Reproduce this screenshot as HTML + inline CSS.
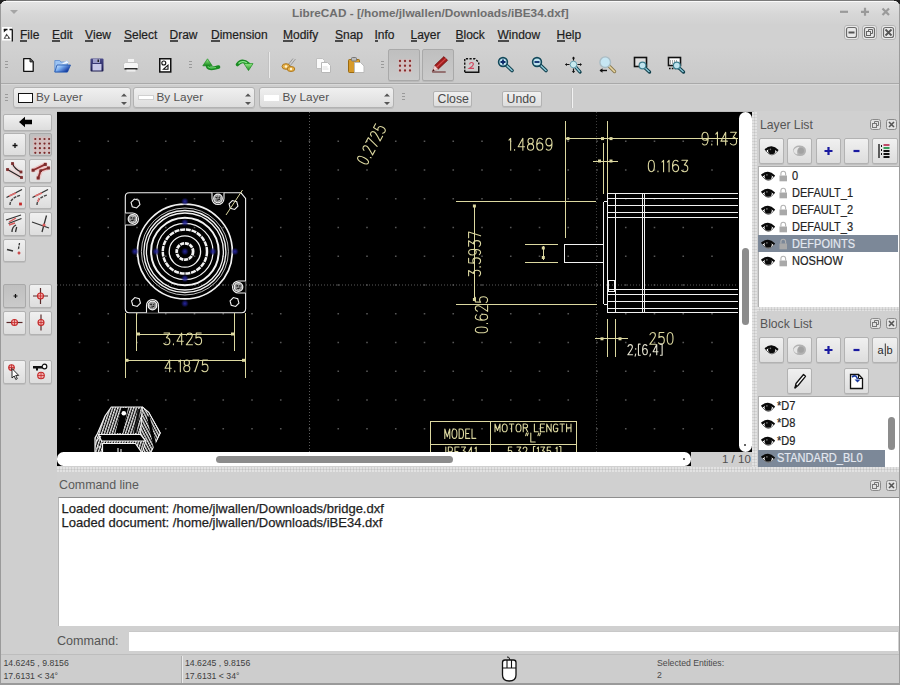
<!DOCTYPE html><html><head><meta charset="utf-8"><style>
*{margin:0;padding:0;box-sizing:border-box}
html,body{width:900px;height:685px;overflow:hidden}
body{position:relative;background:#d0d0d0;font-family:"Liberation Sans",sans-serif;color:#2e2e2e}
.a{position:absolute}
.t{position:absolute;white-space:nowrap;line-height:1}
.b{position:absolute;border:1px solid #b2b2b2;border-radius:2px;background:linear-gradient(#f0f0f0,#dddddd);box-shadow:0 1px 0 rgba(0,0,0,.08)}
.p{background:linear-gradient(#bfbfbf,#cacaca);border-color:#a9a9a9}
.m{position:absolute;white-space:nowrap;line-height:1;font-size:12px;color:#1e1e1e;top:29px;-webkit-text-stroke:0.2px #1e1e1e}
.m u{text-decoration:none;position:relative}
.m u:after{content:"";position:absolute;left:0;right:0;top:12px;height:1.5px;background:#4a4a4a}
.hd{position:absolute;width:3px;height:9px;background:repeating-linear-gradient(#9a9a9a 0 1px,transparent 1px 3px)}
.dotv,.doth{position:absolute;background-color:#d2d2d2;background-image:radial-gradient(circle at 1px 1px,#e2e2e2 0.8px,transparent 1.2px),radial-gradient(circle at 2.5px 2.5px,#c4c4c4 0.6px,transparent 1px);background-size:3px 3px}
svg{position:absolute;overflow:visible}
</style></head><body><div class="a" style="left:0;top:0;width:900px;height:24px;background:linear-gradient(#e4e4e4,#d6d6d6 60%,#d2d2d2);border-top:1px solid #7a7a7a"></div><div class="a" style="left:4px;top:1px;width:892px;height:1px;background:#fafafa"></div><div class="a" style="left:0;top:0;width:6px;height:6px;background:radial-gradient(circle at 6px 6px,transparent 5px,#222 5.5px)"></div><div class="a" style="left:894px;top:0;width:6px;height:6px;background:radial-gradient(circle at 0 6px,transparent 5px,#222 5.5px)"></div><svg style="left:9px;top:9px" width="10" height="6"><path d="M1 1h8l-4 4z" fill="#a5a5a5"/></svg><div class="t" style="left:292px;top:8px;font-size:11.8px;font-weight:bold;color:#6e6e6e">LibreCAD - [/home/jlwallen/Downloads/iBE34.dxf]</div><svg style="left:838px;top:6px" width="56" height="14"><path d="M2 5.8h8" stroke="#9a9a9a" stroke-width="2.2"/><path d="M23 5.8h8M27 1.8v8" stroke="#9a9a9a" stroke-width="2.2"/><path d="M44.5 2.5l6.5 6.5M51 2.5l-6.5 6.5" stroke="#9a9a9a" stroke-width="2.2"/></svg><div class="a" style="left:0;top:24px;width:900px;height:23px;background:#d1d1d1"></div><svg style="left:2px;top:27px" width="12" height="15"><rect x="0" y="0" width="10" height="13.5" fill="#fff"/><path d="M1.8 2.5H5.5M7.5 2.5h3M10.3 2.5V14.5" stroke="#111" stroke-width="1.3" fill="none"/><path d="M1.8 2v3.5L5 2.5z" fill="#111"/><path d="M1.6 11.8L4.5 6.5L8.5 11.8z" fill="#444"/><rect x="3.6" y="9.3" width="2.4" height="2" fill="#fff"/></svg><div class="m" style="left:20px"><u>F</u>ile</div><div class="m" style="left:52px"><u>E</u>dit</div><div class="m" style="left:85px"><u>V</u>iew</div><div class="m" style="left:124px"><u>S</u>elect</div><div class="m" style="left:169.5px"><u>D</u>raw</div><div class="m" style="left:211px"><u>D</u>imension</div><div class="m" style="left:283px"><u>M</u>odify</div><div class="m" style="left:335px"><u>S</u>nap</div><div class="m" style="left:374.5px"><u>I</u>nfo</div><div class="m" style="left:410.5px"><u>L</u>ayer</div><div class="m" style="left:455.5px"><u>B</u>lock</div><div class="m" style="left:497.5px"><u>W</u>indow</div><div class="m" style="left:556.5px"><u>H</u>elp</div><svg style="left:843.5px;top:25px" width="15" height="15"><rect x="0.5" y="0.5" width="14" height="14" rx="2.5" fill="#e9e9e9" stroke="#b3b3b3"/><rect x="2.5" y="2.5" width="10" height="10" rx="2" fill="none" stroke="#6a6a6a" stroke-width="1.2"/><path d="M4.5 7.5h6" stroke="#555" stroke-width="2"/></svg><svg style="left:862px;top:25px" width="15" height="15"><rect x="0.5" y="0.5" width="14" height="14" rx="2.5" fill="#e9e9e9" stroke="#b3b3b3"/><rect x="2.5" y="2.5" width="10" height="10" rx="2" fill="none" stroke="#6a6a6a" stroke-width="1.2"/><rect x="4.5" y="6.5" width="4" height="4" fill="none" stroke="#666"/><path d="M6.5 6.5v-2h4v4h-2" fill="none" stroke="#666"/></svg><svg style="left:881.3px;top:25px" width="15" height="15"><rect x="0.5" y="0.5" width="14" height="14" rx="2.5" fill="#e9e9e9" stroke="#b3b3b3"/><rect x="2.5" y="2.5" width="10" height="10" rx="2" fill="none" stroke="#6a6a6a" stroke-width="1.2"/><path d="M4.5 4.5l6 6M10.5 4.5l-6 6" stroke="#555" stroke-width="1.8"/></svg><div class="a" style="left:0;top:47px;width:900px;height:36px;background:linear-gradient(#d1d1d1,#c9c9c9)"></div><div class="a" style="left:0;top:83px;width:900px;height:1px;background:#a9a9a9"></div><div class="a" style="left:0;top:84px;width:900px;height:1px;background:#d8d8d8"></div><div class="hd" style="left:5px;top:61px"></div><div class="hd" style="left:189px;top:61px"></div><div class="hd" style="left:381px;top:61px"></div><div class="a" style="left:268px;top:52px;width:1px;height:26px;background:#c2c2c2"></div><div class="a" style="left:269px;top:52px;width:1px;height:26px;background:#ebebeb"></div><div class="b p" style="left:388px;top:49px;width:32px;height:32px"></div><div class="b p" style="left:422px;top:49px;width:32px;height:32px"></div><div class="a" style="left:0;top:85px;width:900px;height:26px;background:#cdcdcd"></div><div class="hd" style="left:5px;top:94px"></div><div class="hd" style="left:402px;top:93px"></div><div class="b" style="left:12.5px;top:87px;width:118px;height:21px;border-radius:3px"></div><div class="a" style="left:18px;top:93px;width:15px;height:10px;background:#fff;border:1px solid #111"></div><div class="t" style="left:36.0px;top:91.5px;font-size:11.8px;color:#525252">By Layer</div><svg style="left:119.5px;top:91px" width="8" height="16"><path d="M1 5.5l3-3 3 3zM1 11l3 3 3-3z" fill="#555"/></svg><div class="b" style="left:133px;top:87px;width:122px;height:21px;border-radius:3px"></div><div class="a" style="left:137.5px;top:95px;width:16px;height:5px;background:#fff;border:1px solid #d0d0d0"></div><div class="t" style="left:156.5px;top:91.5px;font-size:11.8px;color:#525252">By Layer</div><svg style="left:244px;top:91px" width="8" height="16"><path d="M1 5.5l3-3 3 3zM1 11l3 3 3-3z" fill="#555"/></svg><div class="b" style="left:259px;top:87px;width:135px;height:21px;border-radius:3px"></div><div class="a" style="left:264px;top:95px;width:14.5px;height:5.5px;background:#fff"></div><div class="t" style="left:282.5px;top:91.5px;font-size:11.8px;color:#525252">By Layer</div><svg style="left:383px;top:91px" width="8" height="16"><path d="M1 5.5l3-3 3 3zM1 11l3 3 3-3z" fill="#555"/></svg><div class="b" style="left:433px;top:90.5px;width:39px;height:16px;border-radius:2px"></div><div class="t" style="left:437.5px;top:92.5px;font-size:12.3px;color:#4a4a4a">Close</div><div class="b" style="left:502px;top:90.5px;width:40px;height:16px;border-radius:2px"></div><div class="t" style="left:506.5px;top:92.5px;font-size:12.3px;color:#4a4a4a">Undo</div><div class="a" style="left:571px;top:88px;width:1px;height:20px;background:#c0c0c0"></div><div class="a" style="left:572px;top:88px;width:1px;height:20px;background:#f2f2f2"></div><div class="a" style="left:0;top:111px;width:57px;height:544px;background:#cfcfcf"></div><div class="a" style="left:0;top:4px;width:1px;height:681px;background:#9a9a9a"></div><div class="a" style="left:899px;top:4px;width:1px;height:681px;background:#a0a0a0"></div><svg style="left:23px;top:58px" width="11" height="14" viewBox="0 0 11 14"><path d="M0.7 0.7h6.5l3 3v9.6h-9.5z" fill="#fff" stroke="#111" stroke-width="1.3" stroke-linejoin="round"/><path d="M7 0.7v3.2h3.2" fill="#666" stroke="#222"/></svg><svg style="left:54px;top:59px" width="17" height="14" viewBox="0 0 17 14"><defs><linearGradient id="gf" x1="0" y1="0" x2="1" y2="0.6"><stop offset="0" stop-color="#e4f2ff"/><stop offset=".45" stop-color="#7aaef0"/><stop offset="1" stop-color="#0a2f9a"/></linearGradient></defs><path d="M0.8 1.5h5l1 1.5h6.5v10H0.8z" fill="#9cc4f4" stroke="#5a8ad0" stroke-width="0.8"/><path d="M6 5.5L13 1.5L15 4" fill="#f4f8ff" stroke="#a8c8f0" stroke-width="0.8"/><path d="M3 6h13.5l-3 7H0.8z" fill="url(#gf)" stroke="#2050a8" stroke-width="0.8"/></svg><svg style="left:90px;top:58px" width="14" height="14" viewBox="0 0 14 14"><defs><linearGradient id="gs" x1="0" y1="0" x2="0" y2="1"><stop offset="0" stop-color="#4a4a8a"/><stop offset="1" stop-color="#1c1c50"/></linearGradient></defs><rect x="0.5" y="0.5" width="13" height="13" rx="1" fill="url(#gs)"/><rect x="2.5" y="6" width="9" height="6.5" fill="#c8c8e8"/><rect x="3" y="1" width="7" height="4" fill="#9c9cc8"/><rect x="7.5" y="1.5" width="1.5" height="2.5" fill="#222"/></svg><svg style="left:123px;top:58px" width="16" height="14" viewBox="0 0 16 14"><rect x="4.5" y="0.5" width="7" height="5" fill="#f4f4f4" stroke="#cfcfcf"/><path d="M0.5 6.5q0-2 2-2h11q2 0 2 2v4.5h-15z" fill="#f6f6f6" stroke="#c4c4c4"/><rect x="1.5" y="10" width="13" height="1.6" fill="#2a2a2a"/><rect x="3.5" y="11.6" width="9" height="2" fill="#eee"/></svg><svg style="left:159px;top:58px" width="13" height="15" viewBox="0 0 13 15"><rect x="0.75" y="0.75" width="11" height="13.2" fill="#fff" stroke="#111" stroke-width="1.5"/><circle cx="4.8" cy="5" r="2" fill="none" stroke="#111" stroke-width="1.1"/><path d="M4.5 11.2L9 7.2V11.2z" fill="none" stroke="#111" stroke-width="1.1"/></svg><svg style="left:202px;top:58px" width="18" height="14" viewBox="0 0 18 14"><defs><linearGradient id="gu" x1="0" y1="0" x2="0" y2="1"><stop offset="0" stop-color="#9af08a"/><stop offset="1" stop-color="#15861a"/></linearGradient></defs><path d="M5.5 7Q5.5 12.5 16.5 9" fill="none" stroke="#1a8a22" stroke-width="3.6" stroke-linecap="round"/><path d="M5.8 7.5Q6 11 14 9.5" fill="none" stroke="#6ad86a" stroke-width="1.2"/><path d="M0.8 7.8L5.5 0.8L10.2 7.8z" fill="url(#gu)" stroke="#178a1c" stroke-width="0.7"/></svg><svg style="left:236px;top:58px" width="18" height="14" viewBox="0 0 18 14"><path d="M1.5 6.5Q6 0.5 12.5 6" fill="none" stroke="#1a8a22" stroke-width="3.6" stroke-linecap="round"/><path d="M2.5 5.5Q6 2 11 5" fill="none" stroke="#8ae88a" stroke-width="1.2"/><path d="M8 5.6H17L12.5 12.6z" fill="url(#gu)" stroke="#178a1c" stroke-width="0.7"/></svg><svg style="left:281px;top:58px" width="16" height="14" viewBox="0 0 16 14"><path d="M9 8L14.5 1M7 7L12 0.5" stroke="#9a9a9a" stroke-width="1"/><ellipse cx="5" cy="8.5" rx="4" ry="2.8" fill="#e6b048" stroke="#b07a20"/><ellipse cx="10" cy="11" rx="3.8" ry="2.5" fill="#e6b048" stroke="#b07a20"/><circle cx="5" cy="8.5" r="1.3" fill="#fff3cf"/><circle cx="10" cy="11" r="1.2" fill="#fff3cf"/></svg><svg style="left:316px;top:58px" width="15" height="15" viewBox="0 0 15 15"><path d="M0.5 0.5h6l2 2v8h-8z" fill="#fafafa" stroke="#c0c0c0"/><path d="M5.5 4.5h6l3 3v7h-9z" fill="#fff" stroke="#b8b8b8"/><path d="M6.5 9h5M6.5 11h6" stroke="#ddd"/></svg><svg style="left:348px;top:57px" width="17" height="16" viewBox="0 0 17 16"><rect x="0.5" y="2.5" width="11" height="13" rx="1" fill="#d79a2a" stroke="#9a6a10"/><rect x="3.5" y="0.5" width="5" height="3.5" rx="1" fill="#bbb" stroke="#777"/><path d="M6.5 5.5h6l3.5 3.5v6.5h-9.5z" fill="#fff" stroke="#bbb"/></svg><svg style="left:398px;top:59px" width="14" height="14" viewBox="0 0 14 14"><rect x="0" y="0" width="14" height="14" fill="#e8bcbc" opacity=".35"/><circle cx="2" cy="2.0" r="1.15" fill="#8a2c2c"/><circle cx="2" cy="6.75" r="1.15" fill="#8a2c2c"/><circle cx="2" cy="11.5" r="1.15" fill="#8a2c2c"/><circle cx="7" cy="2.0" r="1.15" fill="#8a2c2c"/><circle cx="7" cy="6.75" r="1.15" fill="#8a2c2c"/><circle cx="7" cy="11.5" r="1.15" fill="#8a2c2c"/><circle cx="12" cy="2.0" r="1.15" fill="#8a2c2c"/><circle cx="12" cy="6.75" r="1.15" fill="#8a2c2c"/><circle cx="12" cy="11.5" r="1.15" fill="#8a2c2c"/></svg><svg style="left:430px;top:56px" width="20" height="20" viewBox="0 0 20 20"><path d="M4.6 9.4L13.9 0.6L17.6 4.3L8.1 13.2z" fill="#a01c1c" stroke="#6a0a0a" stroke-width="0.7"/><path d="M6.5 11.2L15.8 2.4" stroke="#d04848" stroke-width="1.3"/><path d="M4.6 9.4L8.1 13.2L2 15.6z" fill="#f3cfcf" stroke="#b08080" stroke-width="0.5"/><path d="M2 15.6l1.6-2.6 1 1.4z" fill="#3a0a0a"/><path d="M2.2 16h13.5" stroke="#6a2a2a" stroke-width="1.1"/></svg><svg style="left:464px;top:58px" width="16" height="15" viewBox="0 0 16 15"><path d="M0.75 14V0.75H11L14.75 4.2V8" fill="none" stroke="#111" stroke-width="1.4" stroke-dasharray="2.2 1.4"/><path d="M0.75 14.2H14.75V8" fill="none" stroke="#111" stroke-width="1.4"/><path d="M5.5 6.3Q6 4.4 7.7 4.5Q9.6 4.7 9.3 6.6Q9 8 5.5 10.3H10" fill="none" stroke="#d04860" stroke-width="1.2"/></svg><svg style="left:496px;top:55px" width="20" height="20" viewBox="0 0 20 20"><path d="M7 7L16 15.5" stroke="#0d3d4a" stroke-width="3.6" stroke-linecap="round"/><path d="M7 7L16 15.5" stroke="#8cc6d6" stroke-width="1.6" stroke-linecap="round"/><circle cx="7" cy="7" r="4.4" fill="#bfe3ee" stroke="#12485a" stroke-width="1.6"/><path d="M4.5 7h5M7 4.5v5" stroke="#0b2a6a" stroke-width="1.8"/></svg><svg style="left:530px;top:55px" width="20" height="20" viewBox="0 0 20 20"><path d="M7 7L16 15.5" stroke="#0d3d4a" stroke-width="3.6" stroke-linecap="round"/><path d="M7 7L16 15.5" stroke="#8cc6d6" stroke-width="1.6" stroke-linecap="round"/><circle cx="7" cy="7" r="4.4" fill="#bfe3ee" stroke="#12485a" stroke-width="1.6"/><path d="M4.5 7h5" stroke="#0b2a6a" stroke-width="1.8"/></svg><svg style="left:564px;top:55px" width="20" height="20" viewBox="0 0 20 20"><path d="M9.5 9.5L16 17" stroke="#0d3d4a" stroke-width="3.4" stroke-linecap="round"/><path d="M9.5 9.5L16 17" stroke="#8cc6d6" stroke-width="1.4"/><circle cx="9.5" cy="9.5" r="3.3" fill="#c8eaf0" stroke="#6aa0b0"/><path d="M1.5 9.5h4M13.5 9.5h3.5M9.5 2v3.5M9.5 13.5v4" stroke="#111" stroke-width="1.2"/><path d="M1 9.5l2-1.6v3.2zM18 9.5l-2-1.6v3.2zM9.5 1.5l-1.6 2h3.2zM9.5 18l-1.6-2h3.2z" fill="#111"/></svg><svg style="left:598px;top:55px" width="20" height="20" viewBox="0 0 20 20"><path d="M8 8L16.5 16.5" stroke="#8a7a50" stroke-width="3.4" stroke-linecap="round"/><path d="M8 8L16.5 16.5" stroke="#e8d6a0" stroke-width="1.6" stroke-linecap="round"/><circle cx="7.2" cy="7.2" r="5.3" fill="#c6e6f3" stroke="#a9bcc4" stroke-width="1.4"/><path d="M2 15.5h7" stroke="#111" stroke-width="1.4"/><path d="M1.5 15.5l3-2.2v4.4z" fill="#111"/></svg><svg style="left:633px;top:56px" width="20" height="20" viewBox="0 0 20 20"><rect x="1.5" y="1.5" width="12" height="9" fill="#e0e0e0" stroke="#111" stroke-width="1.6"/><path d="M10 10L16.5 16" stroke="#0d3d4a" stroke-width="3.4" stroke-linecap="round"/><path d="M10 10L16.5 16" stroke="#8cc6d6" stroke-width="1.4"/><circle cx="9.5" cy="9.5" r="3.4" fill="#bfe3ee" stroke="#3e7f90" stroke-width="1.2"/></svg><svg style="left:667px;top:56px" width="20" height="20" viewBox="0 0 20 20"><rect x="1.5" y="1.5" width="12" height="8" fill="#fff" stroke="#111" stroke-width="1.6"/><path d="M3 5h8M3 7h6" stroke="#555" stroke-dasharray="1 1"/><path d="M2 12.5h10" stroke="#111" stroke-width="1.5" stroke-dasharray="1.6 1.2"/><path d="M10 10L16.5 16" stroke="#0d3d4a" stroke-width="3.4" stroke-linecap="round"/><path d="M10 10L16.5 16" stroke="#8cc6d6" stroke-width="1.4"/><circle cx="9.8" cy="9.5" r="3.4" fill="#bfe3ee" stroke="#3e7f90" stroke-width="1.2"/></svg><div class="b" style="left:3px;top:114px;width:49px;height:17px"></div><svg style="left:18px;top:116px" width="16" height="12" viewBox="0 0 16 12"><path d="M1 6L7 0.8V3.8H14V8.2H7V11.2z" fill="#000"/></svg><div class="b" style="left:2.8px;top:132.8px;width:23.5px;height:23.5px"></div><svg style="left:2.8px;top:132.8px" width="24" height="24" viewBox="0 0 24 24"><path d="M9.5 12.5h5M12 10v5" stroke="#111" stroke-width="1.3"/></svg><div class="b p" style="left:28.8px;top:132.8px;width:23.5px;height:23.5px"></div><svg style="left:28.8px;top:132.8px" width="24" height="24" viewBox="0 0 24 24"><rect x="4" y="3.5" width="17" height="17" fill="#e6b8b8" opacity=".45"/><circle cx="6.3" cy="6.0" r="1.1" fill="#7a2a2a"/><circle cx="6.3" cy="10.6" r="1.1" fill="#7a2a2a"/><circle cx="6.3" cy="15.2" r="1.1" fill="#7a2a2a"/><circle cx="6.3" cy="19.799999999999997" r="1.1" fill="#7a2a2a"/><circle cx="10.899999999999999" cy="6.0" r="1.1" fill="#7a2a2a"/><circle cx="10.899999999999999" cy="10.6" r="1.1" fill="#7a2a2a"/><circle cx="10.899999999999999" cy="15.2" r="1.1" fill="#7a2a2a"/><circle cx="10.899999999999999" cy="19.799999999999997" r="1.1" fill="#7a2a2a"/><circle cx="15.5" cy="6.0" r="1.1" fill="#7a2a2a"/><circle cx="15.5" cy="10.6" r="1.1" fill="#7a2a2a"/><circle cx="15.5" cy="15.2" r="1.1" fill="#7a2a2a"/><circle cx="15.5" cy="19.799999999999997" r="1.1" fill="#7a2a2a"/><circle cx="20.099999999999998" cy="6.0" r="1.1" fill="#7a2a2a"/><circle cx="20.099999999999998" cy="10.6" r="1.1" fill="#7a2a2a"/><circle cx="20.099999999999998" cy="15.2" r="1.1" fill="#7a2a2a"/><circle cx="20.099999999999998" cy="19.799999999999997" r="1.1" fill="#7a2a2a"/></svg><div class="b" style="left:2.8px;top:159.3px;width:23.5px;height:23.5px"></div><svg style="left:2.8px;top:159.3px" width="24" height="24" viewBox="0 0 24 24"><path d="M4.5 10.5L18.5 18.5M9.5 4.5Q11 9.5 18 13" fill="none" stroke="#f0a8a8" stroke-width="4" opacity=".35"/><path d="M4.5 10.5L18.5 18.5M9.5 4.5Q11 9.5 18 13" fill="none" stroke="#222" stroke-width="1.1"/><rect x="3.1" y="9.1" width="2.8" height="2.8" fill="#7e2e2e"/><rect x="17.1" y="17.1" width="2.8" height="2.8" fill="#7e2e2e"/><rect x="8.1" y="3.1" width="2.8" height="2.8" fill="#7e2e2e"/><rect x="16.6" y="11.6" width="2.8" height="2.8" fill="#7e2e2e"/></svg><div class="b" style="left:28.8px;top:159.3px;width:23.5px;height:23.5px"></div><svg style="left:28.8px;top:159.3px" width="24" height="24" viewBox="0 0 24 24"><path d="M4.1 11.2L16.3 5.4M9.2 19L11.7 11.7L19.4 9" fill="none" stroke="#f2a0a0" stroke-width="4.5" opacity=".45" stroke-linecap="round"/><path d="M4.1 11.2L16.3 5.4M9.2 19L11.7 11.7L19.4 9" fill="none" stroke="#8e2e2e" stroke-width="1.8"/><rect x="2.5999999999999996" y="9.7" width="3" height="3" fill="#7a2a2a"/><rect x="14.8" y="3.9000000000000004" width="3" height="3" fill="#7a2a2a"/><rect x="7.699999999999999" y="17.5" width="3" height="3" fill="#7a2a2a"/><rect x="17.9" y="7.5" width="3" height="3" fill="#7a2a2a"/><rect x="10.399999999999999" y="10.399999999999999" width="2.6" height="2.6" fill="#7a2a2a"/></svg><div class="b" style="left:2.8px;top:185.8px;width:23.5px;height:23.5px"></div><svg style="left:2.8px;top:185.8px" width="24" height="24" viewBox="0 0 24 24"><path d="M3.5 11.5L19 3.5" stroke="#333" stroke-width="1.4"/><path d="M7 19Q7 12 18 9" fill="none" stroke="#444" stroke-width="1.4" stroke-dasharray="3 1"/><path d="M6 10L13 7" stroke="#e07070" stroke-width="1.5"/><rect x="16.1" y="16.6" width="2.8" height="2.8" fill="#c42a2a"/></svg><div class="b" style="left:28.8px;top:185.8px;width:23.5px;height:23.5px"></div><svg style="left:28.8px;top:185.8px" width="24" height="24" viewBox="0 0 24 24"><path d="M3.5 11.5L19 3.5" stroke="#333" stroke-width="1.4"/><path d="M8 19Q8 12 18 9" fill="none" stroke="#444" stroke-width="1.4" stroke-dasharray="3 1"/><path d="M6 10L13 7M10 12l-1 4" stroke="#e07070" stroke-width="1.5"/></svg><div class="b" style="left:2.8px;top:212.3px;width:23.5px;height:23.5px"></div><svg style="left:2.8px;top:212.3px" width="24" height="24" viewBox="0 0 24 24"><path d="M3 8L18 3M5.5 11.5L18.5 6.5" stroke="#333" stroke-width="1.3"/><path d="M6 10L13 6M6 13l6-2" stroke="#d85a5a" stroke-width="1.4"/><path d="M9 20Q9 15 13 13M12.5 20l1.2-5" fill="none" stroke="#333" stroke-width="1.3"/></svg><div class="b" style="left:28.8px;top:212.3px;width:23.5px;height:23.5px"></div><svg style="left:28.8px;top:212.3px" width="24" height="24" viewBox="0 0 24 24"><path d="M3 10L20 16M17.5 3.5L13 20" stroke="#333" stroke-width="1.3"/><circle cx="15" cy="13" r="1.6" fill="#d85a5a"/></svg><div class="b" style="left:2.8px;top:238.8px;width:23.5px;height:23.5px"></div><svg style="left:2.8px;top:238.8px" width="24" height="24" viewBox="0 0 24 24"><path d="M4 10.5l6 1.5" stroke="#333" stroke-width="1.3"/><path d="M16.5 4l-1.2 7" stroke="#333" stroke-width="1.3" stroke-dasharray="2.5 1"/><path d="M14.5 14h3M16 12.5v3" stroke="#c42a2a" stroke-width="1.2"/></svg><div class="b p" style="left:2.8px;top:284px;width:23.5px;height:23.5px"></div><svg style="left:2.8px;top:284px" width="24" height="24" viewBox="0 0 24 24"><path d="M10.5 12h4M12.5 10v4" stroke="#111" stroke-width="1.2"/></svg><div class="b" style="left:28.8px;top:284px;width:23.5px;height:23.5px"></div><svg style="left:28.8px;top:284px" width="24" height="24" viewBox="0 0 24 24"><path d="M4 12h15M11.5 4v16" stroke="#5a2a2a" stroke-width="1.2"/><circle cx="11.5" cy="12" r="3" fill="#f2b0b0" stroke="#c42a2a" stroke-width="1.1"/><path d="M8.5 12h6M11.5 9v6" stroke="#c42a2a" stroke-width="0.8"/></svg><div class="b" style="left:2.8px;top:311px;width:23.5px;height:23.5px"></div><svg style="left:2.8px;top:311px" width="24" height="24" viewBox="0 0 24 24"><path d="M3.5 11.5h16" stroke="#5a2a2a" stroke-width="1.2"/><circle cx="11.5" cy="11.5" r="3" fill="#f2b0b0" stroke="#c42a2a" stroke-width="1.1"/><path d="M8.5 11.5h6M11.5 8.5v6" stroke="#c42a2a" stroke-width="0.8"/></svg><div class="b" style="left:28.8px;top:311px;width:23.5px;height:23.5px"></div><svg style="left:28.8px;top:311px" width="24" height="24" viewBox="0 0 24 24"><path d="M12 3.5v16" stroke="#5a2a2a" stroke-width="1.2"/><circle cx="12" cy="11.5" r="3" fill="#f2b0b0" stroke="#c42a2a" stroke-width="1.1"/><path d="M9 11.5h6M12 8.5v6" stroke="#c42a2a" stroke-width="0.8"/></svg><div class="b" style="left:2.8px;top:360.3px;width:23.5px;height:23.5px"></div><svg style="left:2.8px;top:360.3px" width="24" height="24" viewBox="0 0 24 24"><circle cx="8.5" cy="7.5" r="2.8" fill="#f2b0b0" stroke="#c42a2a" stroke-width="1.1"/><path d="M5.7 7.5h5.6M8.5 4.7v5.6" stroke="#c42a2a" stroke-width="0.8"/><path d="M9 8.5v9.5l2.2-2 1.6 3.5 1.5-0.8-1.6-3.3h3z" fill="#fff" stroke="#111" stroke-width="0.9"/></svg><div class="b" style="left:28.8px;top:360.3px;width:23.5px;height:23.5px"></div><svg style="left:28.8px;top:360.3px" width="24" height="24" viewBox="0 0 24 24"><path d="M4 6h9v2.5H9v2H7v-2H4z" fill="#111"/><circle cx="15.5" cy="6.5" r="2.3" fill="#fff" stroke="#111" stroke-width="1.2"/><circle cx="12" cy="15.5" r="3.3" fill="#f2b0b0" stroke="#c42a2a" stroke-width="1.1"/><path d="M8.7 15.5h6.6M12 12.2v6.6" stroke="#c42a2a" stroke-width="0.8"/></svg><div class="a" style="left:56.5px;top:111px;width:697px;height:1px;background:#bdbdbd"></div><div class="a" style="left:57px;top:112px;width:682px;height:341px;background:#000"></div><div class="a" style="left:57px;top:452px;width:634px;height:13.5px;background:#000"></div><div class="a" style="left:738.5px;top:112px;width:13.5px;height:340px;background:#000"></div><div class="a" style="left:57px;top:452px;width:634px;height:13.5px;background:#fff;border-radius:6.5px"></div><div class="a" style="left:683px;top:458px;width:2px;height:2px;background:#666"></div><div class="a" style="left:215.5px;top:455.5px;width:237.5px;height:7.5px;background:#8c8c8c;border-radius:4px"></div><div class="a" style="left:738.5px;top:112px;width:13.5px;height:339.5px;background:#fff;border-radius:6.5px"></div><div class="a" style="left:741.5px;top:247.5px;width:7px;height:77px;background:#8c8c8c;border-radius:3.5px"></div><div class="a" style="left:691px;top:452px;width:61px;height:14px;background:#cfcfcf"></div><div class="a" style="left:744px;top:444px;width:2px;height:2px;background:#666"></div><div class="t" style="left:722px;top:454px;font-size:11.5px;color:#505050">1 / 10</div><div class="doth" style="left:57px;top:467px;width:843px;height:5px"></div><div class="dotv" style="left:752px;top:112px;width:5px;height:355px"></div><svg style="left:57px;top:112px;overflow:hidden" width="681" height="340" viewBox="57 112 681 340"><g><defs><radialGradient id="bg"><stop offset="0" stop-color="#2828a0"/><stop offset=".5" stop-color="#1c1c80" stop-opacity=".7"/><stop offset="1" stop-color="#101050" stop-opacity="0"/></radialGradient></defs><path d="M78.70 140.45h1.6v1.6h-1.6zM78.70 169.20h1.6v1.6h-1.6zM78.70 197.95h1.6v1.6h-1.6zM78.70 226.70h1.6v1.6h-1.6zM78.70 255.45h1.6v1.6h-1.6zM78.70 284.20h1.6v1.6h-1.6zM78.70 312.95h1.6v1.6h-1.6zM78.70 341.70h1.6v1.6h-1.6zM78.70 370.45h1.6v1.6h-1.6zM78.70 399.20h1.6v1.6h-1.6zM78.70 427.95h1.6v1.6h-1.6zM107.45 140.45h1.6v1.6h-1.6zM107.45 169.20h1.6v1.6h-1.6zM107.45 197.95h1.6v1.6h-1.6zM107.45 226.70h1.6v1.6h-1.6zM107.45 255.45h1.6v1.6h-1.6zM107.45 284.20h1.6v1.6h-1.6zM107.45 312.95h1.6v1.6h-1.6zM107.45 341.70h1.6v1.6h-1.6zM107.45 370.45h1.6v1.6h-1.6zM107.45 399.20h1.6v1.6h-1.6zM107.45 427.95h1.6v1.6h-1.6zM136.20 140.45h1.6v1.6h-1.6zM136.20 169.20h1.6v1.6h-1.6zM136.20 197.95h1.6v1.6h-1.6zM136.20 226.70h1.6v1.6h-1.6zM136.20 255.45h1.6v1.6h-1.6zM136.20 284.20h1.6v1.6h-1.6zM136.20 312.95h1.6v1.6h-1.6zM136.20 341.70h1.6v1.6h-1.6zM136.20 370.45h1.6v1.6h-1.6zM136.20 399.20h1.6v1.6h-1.6zM136.20 427.95h1.6v1.6h-1.6zM164.95 140.45h1.6v1.6h-1.6zM164.95 169.20h1.6v1.6h-1.6zM164.95 197.95h1.6v1.6h-1.6zM164.95 226.70h1.6v1.6h-1.6zM164.95 255.45h1.6v1.6h-1.6zM164.95 284.20h1.6v1.6h-1.6zM164.95 312.95h1.6v1.6h-1.6zM164.95 341.70h1.6v1.6h-1.6zM164.95 370.45h1.6v1.6h-1.6zM164.95 399.20h1.6v1.6h-1.6zM164.95 427.95h1.6v1.6h-1.6zM193.70 140.45h1.6v1.6h-1.6zM193.70 169.20h1.6v1.6h-1.6zM193.70 197.95h1.6v1.6h-1.6zM193.70 226.70h1.6v1.6h-1.6zM193.70 255.45h1.6v1.6h-1.6zM193.70 284.20h1.6v1.6h-1.6zM193.70 312.95h1.6v1.6h-1.6zM193.70 341.70h1.6v1.6h-1.6zM193.70 370.45h1.6v1.6h-1.6zM193.70 399.20h1.6v1.6h-1.6zM193.70 427.95h1.6v1.6h-1.6zM222.45 140.45h1.6v1.6h-1.6zM222.45 169.20h1.6v1.6h-1.6zM222.45 197.95h1.6v1.6h-1.6zM222.45 226.70h1.6v1.6h-1.6zM222.45 255.45h1.6v1.6h-1.6zM222.45 284.20h1.6v1.6h-1.6zM222.45 312.95h1.6v1.6h-1.6zM222.45 341.70h1.6v1.6h-1.6zM222.45 370.45h1.6v1.6h-1.6zM222.45 399.20h1.6v1.6h-1.6zM222.45 427.95h1.6v1.6h-1.6zM251.20 140.45h1.6v1.6h-1.6zM251.20 169.20h1.6v1.6h-1.6zM251.20 197.95h1.6v1.6h-1.6zM251.20 226.70h1.6v1.6h-1.6zM251.20 255.45h1.6v1.6h-1.6zM251.20 284.20h1.6v1.6h-1.6zM251.20 312.95h1.6v1.6h-1.6zM251.20 341.70h1.6v1.6h-1.6zM251.20 370.45h1.6v1.6h-1.6zM251.20 399.20h1.6v1.6h-1.6zM251.20 427.95h1.6v1.6h-1.6zM279.95 140.45h1.6v1.6h-1.6zM279.95 169.20h1.6v1.6h-1.6zM279.95 197.95h1.6v1.6h-1.6zM279.95 226.70h1.6v1.6h-1.6zM279.95 255.45h1.6v1.6h-1.6zM279.95 284.20h1.6v1.6h-1.6zM279.95 312.95h1.6v1.6h-1.6zM279.95 341.70h1.6v1.6h-1.6zM279.95 370.45h1.6v1.6h-1.6zM279.95 399.20h1.6v1.6h-1.6zM279.95 427.95h1.6v1.6h-1.6zM308.70 140.45h1.6v1.6h-1.6zM308.70 169.20h1.6v1.6h-1.6zM308.70 197.95h1.6v1.6h-1.6zM308.70 226.70h1.6v1.6h-1.6zM308.70 255.45h1.6v1.6h-1.6zM308.70 284.20h1.6v1.6h-1.6zM308.70 312.95h1.6v1.6h-1.6zM308.70 341.70h1.6v1.6h-1.6zM308.70 370.45h1.6v1.6h-1.6zM308.70 399.20h1.6v1.6h-1.6zM308.70 427.95h1.6v1.6h-1.6zM337.45 140.45h1.6v1.6h-1.6zM337.45 169.20h1.6v1.6h-1.6zM337.45 197.95h1.6v1.6h-1.6zM337.45 226.70h1.6v1.6h-1.6zM337.45 255.45h1.6v1.6h-1.6zM337.45 284.20h1.6v1.6h-1.6zM337.45 312.95h1.6v1.6h-1.6zM337.45 341.70h1.6v1.6h-1.6zM337.45 370.45h1.6v1.6h-1.6zM337.45 399.20h1.6v1.6h-1.6zM337.45 427.95h1.6v1.6h-1.6zM366.20 140.45h1.6v1.6h-1.6zM366.20 169.20h1.6v1.6h-1.6zM366.20 197.95h1.6v1.6h-1.6zM366.20 226.70h1.6v1.6h-1.6zM366.20 255.45h1.6v1.6h-1.6zM366.20 284.20h1.6v1.6h-1.6zM366.20 312.95h1.6v1.6h-1.6zM366.20 341.70h1.6v1.6h-1.6zM366.20 370.45h1.6v1.6h-1.6zM366.20 399.20h1.6v1.6h-1.6zM366.20 427.95h1.6v1.6h-1.6zM394.95 140.45h1.6v1.6h-1.6zM394.95 169.20h1.6v1.6h-1.6zM394.95 197.95h1.6v1.6h-1.6zM394.95 226.70h1.6v1.6h-1.6zM394.95 255.45h1.6v1.6h-1.6zM394.95 284.20h1.6v1.6h-1.6zM394.95 312.95h1.6v1.6h-1.6zM394.95 341.70h1.6v1.6h-1.6zM394.95 370.45h1.6v1.6h-1.6zM394.95 399.20h1.6v1.6h-1.6zM394.95 427.95h1.6v1.6h-1.6zM423.70 140.45h1.6v1.6h-1.6zM423.70 169.20h1.6v1.6h-1.6zM423.70 197.95h1.6v1.6h-1.6zM423.70 226.70h1.6v1.6h-1.6zM423.70 255.45h1.6v1.6h-1.6zM423.70 284.20h1.6v1.6h-1.6zM423.70 312.95h1.6v1.6h-1.6zM423.70 341.70h1.6v1.6h-1.6zM423.70 370.45h1.6v1.6h-1.6zM423.70 399.20h1.6v1.6h-1.6zM423.70 427.95h1.6v1.6h-1.6zM452.45 140.45h1.6v1.6h-1.6zM452.45 169.20h1.6v1.6h-1.6zM452.45 197.95h1.6v1.6h-1.6zM452.45 226.70h1.6v1.6h-1.6zM452.45 255.45h1.6v1.6h-1.6zM452.45 284.20h1.6v1.6h-1.6zM452.45 312.95h1.6v1.6h-1.6zM452.45 341.70h1.6v1.6h-1.6zM452.45 370.45h1.6v1.6h-1.6zM452.45 399.20h1.6v1.6h-1.6zM452.45 427.95h1.6v1.6h-1.6zM481.20 140.45h1.6v1.6h-1.6zM481.20 169.20h1.6v1.6h-1.6zM481.20 197.95h1.6v1.6h-1.6zM481.20 226.70h1.6v1.6h-1.6zM481.20 255.45h1.6v1.6h-1.6zM481.20 284.20h1.6v1.6h-1.6zM481.20 312.95h1.6v1.6h-1.6zM481.20 341.70h1.6v1.6h-1.6zM481.20 370.45h1.6v1.6h-1.6zM481.20 399.20h1.6v1.6h-1.6zM481.20 427.95h1.6v1.6h-1.6zM509.95 140.45h1.6v1.6h-1.6zM509.95 169.20h1.6v1.6h-1.6zM509.95 197.95h1.6v1.6h-1.6zM509.95 226.70h1.6v1.6h-1.6zM509.95 255.45h1.6v1.6h-1.6zM509.95 284.20h1.6v1.6h-1.6zM509.95 312.95h1.6v1.6h-1.6zM509.95 341.70h1.6v1.6h-1.6zM509.95 370.45h1.6v1.6h-1.6zM509.95 399.20h1.6v1.6h-1.6zM509.95 427.95h1.6v1.6h-1.6zM538.70 140.45h1.6v1.6h-1.6zM538.70 169.20h1.6v1.6h-1.6zM538.70 197.95h1.6v1.6h-1.6zM538.70 226.70h1.6v1.6h-1.6zM538.70 255.45h1.6v1.6h-1.6zM538.70 284.20h1.6v1.6h-1.6zM538.70 312.95h1.6v1.6h-1.6zM538.70 341.70h1.6v1.6h-1.6zM538.70 370.45h1.6v1.6h-1.6zM538.70 399.20h1.6v1.6h-1.6zM538.70 427.95h1.6v1.6h-1.6zM567.45 140.45h1.6v1.6h-1.6zM567.45 169.20h1.6v1.6h-1.6zM567.45 197.95h1.6v1.6h-1.6zM567.45 226.70h1.6v1.6h-1.6zM567.45 255.45h1.6v1.6h-1.6zM567.45 284.20h1.6v1.6h-1.6zM567.45 312.95h1.6v1.6h-1.6zM567.45 341.70h1.6v1.6h-1.6zM567.45 370.45h1.6v1.6h-1.6zM567.45 399.20h1.6v1.6h-1.6zM567.45 427.95h1.6v1.6h-1.6zM596.20 140.45h1.6v1.6h-1.6zM596.20 169.20h1.6v1.6h-1.6zM596.20 197.95h1.6v1.6h-1.6zM596.20 226.70h1.6v1.6h-1.6zM596.20 255.45h1.6v1.6h-1.6zM596.20 284.20h1.6v1.6h-1.6zM596.20 312.95h1.6v1.6h-1.6zM596.20 341.70h1.6v1.6h-1.6zM596.20 370.45h1.6v1.6h-1.6zM596.20 399.20h1.6v1.6h-1.6zM596.20 427.95h1.6v1.6h-1.6zM624.95 140.45h1.6v1.6h-1.6zM624.95 169.20h1.6v1.6h-1.6zM624.95 197.95h1.6v1.6h-1.6zM624.95 226.70h1.6v1.6h-1.6zM624.95 255.45h1.6v1.6h-1.6zM624.95 284.20h1.6v1.6h-1.6zM624.95 312.95h1.6v1.6h-1.6zM624.95 341.70h1.6v1.6h-1.6zM624.95 370.45h1.6v1.6h-1.6zM624.95 399.20h1.6v1.6h-1.6zM624.95 427.95h1.6v1.6h-1.6zM653.70 140.45h1.6v1.6h-1.6zM653.70 169.20h1.6v1.6h-1.6zM653.70 197.95h1.6v1.6h-1.6zM653.70 226.70h1.6v1.6h-1.6zM653.70 255.45h1.6v1.6h-1.6zM653.70 284.20h1.6v1.6h-1.6zM653.70 312.95h1.6v1.6h-1.6zM653.70 341.70h1.6v1.6h-1.6zM653.70 370.45h1.6v1.6h-1.6zM653.70 399.20h1.6v1.6h-1.6zM653.70 427.95h1.6v1.6h-1.6zM682.45 140.45h1.6v1.6h-1.6zM682.45 169.20h1.6v1.6h-1.6zM682.45 197.95h1.6v1.6h-1.6zM682.45 226.70h1.6v1.6h-1.6zM682.45 255.45h1.6v1.6h-1.6zM682.45 284.20h1.6v1.6h-1.6zM682.45 312.95h1.6v1.6h-1.6zM682.45 341.70h1.6v1.6h-1.6zM682.45 370.45h1.6v1.6h-1.6zM682.45 399.20h1.6v1.6h-1.6zM682.45 427.95h1.6v1.6h-1.6zM711.20 140.45h1.6v1.6h-1.6zM711.20 169.20h1.6v1.6h-1.6zM711.20 197.95h1.6v1.6h-1.6zM711.20 226.70h1.6v1.6h-1.6zM711.20 255.45h1.6v1.6h-1.6zM711.20 284.20h1.6v1.6h-1.6zM711.20 312.95h1.6v1.6h-1.6zM711.20 341.70h1.6v1.6h-1.6zM711.20 370.45h1.6v1.6h-1.6zM711.20 399.20h1.6v1.6h-1.6zM711.20 427.95h1.6v1.6h-1.6z" fill="#555"/><path d="M309.5 112V452M57 285H738" stroke="#5a5a5a" stroke-width="1" stroke-dasharray="1 2"/><path d="M596.5 112V452" stroke="#3c3c3c" stroke-width="1" stroke-dasharray="1 2"/><path d="M129.3 192.8H241L245.6 198.5V308.8Q245.6 312.8 241.6 312.8H129.3Q125.3 312.8 125.3 308.8V196.8Q125.3 192.8 129.3 192.8z" fill="none" stroke="#f2f2f2" stroke-width="1.1"/><circle cx="184.9" cy="251.5" r="47.4" fill="none" stroke="#f2f2f2" stroke-width="1.7"/><circle cx="184.9" cy="251.5" r="43.5" fill="none" stroke="#f2f2f2" stroke-width="0.8"/><circle cx="184.9" cy="251.5" r="41" fill="none" stroke="#f2f2f2" stroke-width="1.3"/><circle cx="184.9" cy="251.5" r="38.5" fill="none" stroke="#f2f2f2" stroke-width="1.3"/><circle cx="184.9" cy="251.5" r="33.8" fill="none" stroke="#f2f2f2" stroke-width="2.0"/><circle cx="184.9" cy="251.5" r="28.1" fill="none" stroke="#f2f2f2" stroke-width="1.2"/><circle cx="184.9" cy="251.5" r="22.1" fill="none" stroke="#f2f2f2" stroke-width="2.5" stroke-dasharray="5 0.8"/><circle cx="184.9" cy="251.5" r="15.7" fill="none" stroke="#f2f2f2" stroke-width="1.3"/><circle cx="184.9" cy="251.5" r="8.2" fill="none" stroke="#f2f2f2" stroke-width="2.8" stroke-dasharray="4 0.8"/><circle cx="184.9" cy="251.5" r="4" fill="url(#bg)"/><circle cx="134.9" cy="251.5" r="4" fill="url(#bg)"/><circle cx="234.9" cy="251.5" r="4" fill="url(#bg)"/><circle cx="184.9" cy="201.5" r="4" fill="url(#bg)"/><circle cx="184.9" cy="303.5" r="4" fill="url(#bg)"/><circle cx="155.9" cy="251.5" r="4" fill="url(#bg)"/><circle cx="212.9" cy="251.5" r="4" fill="url(#bg)"/><circle cx="184.9" cy="222.5" r="4" fill="url(#bg)"/><circle cx="184.9" cy="278.5" r="4" fill="url(#bg)"/><polygon points="139.94,204.69 136.69,207.94 132.25,206.75 131.06,202.31 134.31,199.06 138.75,200.25" fill="none" stroke="#f2f2f2" stroke-width="1.1"/><polygon points="140.44,303.19 137.19,306.44 132.75,305.25 131.56,300.81 134.81,297.56 139.25,298.75" fill="none" stroke="#f2f2f2" stroke-width="1.1"/><polygon points="238.94,303.19 235.69,306.44 231.25,305.25 230.06,300.81 233.31,297.56 237.75,298.75" fill="none" stroke="#f2f2f2" stroke-width="1.1"/><polygon points="237.94,206.19 234.69,209.44 230.25,208.25 229.06,203.81 232.31,200.56 236.75,201.75" fill="none" stroke="#f2f2f2" stroke-width="1.1"/><path d="M212 192.8V198.5A6 6 0 0 0 224 198.5V192.8" fill="#000" stroke="#f2f2f2" stroke-width="1.1"/><circle cx="218" cy="198.5" r="4.3" fill="#8c8c8c" stroke="#f2f2f2" stroke-width="1.2"/><circle cx="216.5" cy="197.3" r="1" fill="#222"/><circle cx="219.6" cy="197.5" r="1" fill="#222"/><path d="M216 200.5L220 199.3" stroke="#111" stroke-width="1"/><circle cx="218" cy="198.5" r="2.6" fill="none" stroke="#ddd" stroke-width="0.8" stroke-dasharray="1.2 1.2"/><path d="M125.3 213H132.5A6 6 0 0 1 132.5 225H125.3" fill="#000" stroke="#f2f2f2" stroke-width="1.1"/><circle cx="132.5" cy="219" r="4.3" fill="#8c8c8c" stroke="#f2f2f2" stroke-width="1.2"/><circle cx="131.0" cy="217.8" r="1" fill="#222"/><circle cx="134.1" cy="218" r="1" fill="#222"/><path d="M130.5 221L134.5 219.8" stroke="#111" stroke-width="1"/><circle cx="132.5" cy="219" r="2.6" fill="none" stroke="#ddd" stroke-width="0.8" stroke-dasharray="1.2 1.2"/><path d="M245.6 281H238.5A6 6 0 0 0 238.5 293H245.6" fill="#000" stroke="#f2f2f2" stroke-width="1.1"/><circle cx="238.5" cy="287" r="4.3" fill="#8c8c8c" stroke="#f2f2f2" stroke-width="1.2"/><circle cx="237.0" cy="285.8" r="1" fill="#222"/><circle cx="240.1" cy="286" r="1" fill="#222"/><path d="M236.5 289L240.5 287.8" stroke="#111" stroke-width="1"/><circle cx="238.5" cy="287" r="2.6" fill="none" stroke="#ddd" stroke-width="0.8" stroke-dasharray="1.2 1.2"/><path d="M146.5 312.8V305.5A6 6 0 0 1 158.5 305.5V312.8" fill="#000" stroke="#f2f2f2" stroke-width="1.1"/><circle cx="152.5" cy="305.5" r="4.3" fill="#8c8c8c" stroke="#f2f2f2" stroke-width="1.2"/><circle cx="151.0" cy="304.3" r="1" fill="#222"/><circle cx="154.1" cy="304.5" r="1" fill="#222"/><path d="M150.5 307.5L154.5 306.3" stroke="#111" stroke-width="1"/><circle cx="152.5" cy="305.5" r="2.6" fill="none" stroke="#ddd" stroke-width="0.8" stroke-dasharray="1.2 1.2"/><path d="M242.5 190L226 215" stroke="#dcd8a0" stroke-width="1"/><path shape-rendering="crispEdges" d="M125.3 313V378M245.3 313V378M136.3 312.5V351M234.7 312.5V351M137 334H234M125.5 360.3H245" stroke="#dcd8a0" stroke-width="1" fill="none"/><rect x="137.0" y="332.5" width="3" height="3" fill="#dcd8a0"/><rect x="231.0" y="332.5" width="3" height="3" fill="#dcd8a0"/><rect x="125.5" y="358.8" width="3" height="3" fill="#dcd8a0"/><rect x="242.0" y="358.8" width="3" height="3" fill="#dcd8a0"/><g transform="translate(163.8 333) rotate(0) scale(2.0323 1.9500)" fill="none" stroke="#dcd8a0" stroke-width="1.1" stroke-linecap="round" stroke-linejoin="round"><path vector-effect="non-scaling-stroke" transform="translate(0.000 0)" d="M0.1 0H2.9L1.3 2.4C2.5 2.4 3 3.3 3 4.2C3 5.3 2.3 6 1.4 6C0.8 6 0.3 5.7 0 5.3"/><path vector-effect="non-scaling-stroke" transform="translate(4.500 0)" d="M0.25 5.6V6"/><path vector-effect="non-scaling-stroke" transform="translate(6.500 0)" d="M2.3 6V0L0 4.2H3.1"/><path vector-effect="non-scaling-stroke" transform="translate(11.100 0)" d="M0.1 1.1C0.4 0.3 0.9 0 1.5 0C2.3 0 2.9 0.5 2.9 1.4C2.9 2.3 2.3 3 0 6H3"/><path vector-effect="non-scaling-stroke" transform="translate(15.600 0)" d="M2.8 0H0.4L0.2 2.6C0.6 2.3 1 2.1 1.5 2.1C2.4 2.1 3 2.9 3 4C3 5.2 2.4 6 1.4 6C0.8 6 0.3 5.7 0 5.3"/></g><g transform="translate(165 360) rotate(0) scale(2.0188 1.9500)" fill="none" stroke="#dcd8a0" stroke-width="1.1" stroke-linecap="round" stroke-linejoin="round"><path vector-effect="non-scaling-stroke" transform="translate(0.000 0)" d="M2.3 6V0L0 4.2H3.1"/><path vector-effect="non-scaling-stroke" transform="translate(4.600 0)" d="M0.25 5.6V6"/><path vector-effect="non-scaling-stroke" transform="translate(6.600 0)" d="M0.2 0.9L1 0V6"/><path vector-effect="non-scaling-stroke" transform="translate(9.300 0)" d="M1.5 2.8C0.6 2.8 0.2 2.3 0.2 1.4C0.2 0.5 0.7 0 1.5 0C2.3 0 2.8 0.5 2.8 1.4C2.8 2.3 2.4 2.8 1.5 2.8C0.6 2.8 0 3.4 0 4.4C0 5.4 0.6 6 1.5 6C2.4 6 3 5.4 3 4.4C3 3.4 2.4 2.8 1.5 2.8z"/><path vector-effect="non-scaling-stroke" transform="translate(13.800 0)" d="M0 0H3L1 6"/><path vector-effect="non-scaling-stroke" transform="translate(18.300 0)" d="M2.8 0H0.4L0.2 2.6C0.6 2.3 1 2.1 1.5 2.1C2.4 2.1 3 2.9 3 4C3 5.2 2.4 6 1.4 6C0.8 6 0.3 5.7 0 5.3"/></g><g transform="translate(356.5 159.7) rotate(-62) scale(1.7826 2.0000)" fill="none" stroke="#dcd8a0" stroke-width="1.1" stroke-linecap="round" stroke-linejoin="round"><path vector-effect="non-scaling-stroke" transform="translate(0.000 0)" d="M1.5 0C0.3 0 0 1.5 0 3C0 4.5 0.3 6 1.5 6C2.7 6 3 4.5 3 3C3 1.5 2.7 0 1.5 0z"/><path vector-effect="non-scaling-stroke" transform="translate(4.500 0)" d="M0.25 5.6V6"/><path vector-effect="non-scaling-stroke" transform="translate(6.500 0)" d="M0.1 1.1C0.4 0.3 0.9 0 1.5 0C2.3 0 2.9 0.5 2.9 1.4C2.9 2.3 2.3 3 0 6H3"/><path vector-effect="non-scaling-stroke" transform="translate(11.000 0)" d="M0 0H3L1 6"/><path vector-effect="non-scaling-stroke" transform="translate(15.500 0)" d="M0.1 1.1C0.4 0.3 0.9 0 1.5 0C2.3 0 2.9 0.5 2.9 1.4C2.9 2.3 2.3 3 0 6H3"/><path vector-effect="non-scaling-stroke" transform="translate(20.000 0)" d="M2.8 0H0.4L0.2 2.6C0.6 2.3 1 2.1 1.5 2.1C2.4 2.1 3 2.9 3 4C3 5.2 2.4 6 1.4 6C0.8 6 0.3 5.7 0 5.3"/></g><path shape-rendering="crispEdges" d="M565.3 121V238M565 138.6H738M607.4 120.5V194M603.7 143V194M593 161H618M456 201.6H596M456 304.4H597M474.4 204.8V300M525 244.2H558M525 262.2H558M543.3 246V260M607.6 319V357M615.9 319V357M595.4 338.8H627.6" stroke="#dcd8a0" stroke-width="1" fill="none"/><rect x="566.5" y="137.1" width="3" height="3" fill="#dcd8a0"/><rect x="601.0" y="137.1" width="3" height="3" fill="#dcd8a0"/><rect x="609.5" y="137.1" width="3" height="3" fill="#dcd8a0"/><rect x="598.0" y="159.5" width="3" height="3" fill="#dcd8a0"/><rect x="609.5" y="159.5" width="3" height="3" fill="#dcd8a0"/><rect x="472.9" y="204.5" width="3" height="3" fill="#dcd8a0"/><rect x="472.9" y="298.0" width="3" height="3" fill="#dcd8a0"/><rect x="541.8" y="246.5" width="3" height="3" fill="#dcd8a0"/><rect x="541.8" y="256.0" width="3" height="3" fill="#dcd8a0"/><rect x="600.5" y="337.3" width="3" height="3" fill="#dcd8a0"/><rect x="618.5" y="337.3" width="3" height="3" fill="#dcd8a0"/><g transform="translate(508.6 138.3) rotate(0) scale(2.0376 2.0000)" fill="none" stroke="#dcd8a0" stroke-width="1.1" stroke-linecap="round" stroke-linejoin="round"><path vector-effect="non-scaling-stroke" transform="translate(0.000 0)" d="M0.2 0.9L1 0V6"/><path vector-effect="non-scaling-stroke" transform="translate(2.700 0)" d="M0.25 5.6V6"/><path vector-effect="non-scaling-stroke" transform="translate(4.700 0)" d="M2.3 6V0L0 4.2H3.1"/><path vector-effect="non-scaling-stroke" transform="translate(9.300 0)" d="M1.5 2.8C0.6 2.8 0.2 2.3 0.2 1.4C0.2 0.5 0.7 0 1.5 0C2.3 0 2.8 0.5 2.8 1.4C2.8 2.3 2.4 2.8 1.5 2.8C0.6 2.8 0 3.4 0 4.4C0 5.4 0.6 6 1.5 6C2.4 6 3 5.4 3 4.4C3 3.4 2.4 2.8 1.5 2.8z"/><path vector-effect="non-scaling-stroke" transform="translate(13.800 0)" d="M2.7 0.6C2.4 0.2 2 0 1.5 0C0.5 0 0 1.3 0 3.3C0 5 0.5 6 1.5 6C2.4 6 3 5.3 3 4.1C3 3 2.4 2.3 1.5 2.3C0.8 2.3 0.2 2.8 0 3.6"/><path vector-effect="non-scaling-stroke" transform="translate(18.300 0)" d="M3 2.6C2.8 3.4 2.2 3.8 1.5 3.8C0.6 3.8 0 3.1 0 1.9C0 0.8 0.6 0 1.5 0C2.5 0 3 0.9 3 2.6C3 4.8 2.4 6 1.4 6C0.9 6 0.5 5.8 0.2 5.4"/></g><g transform="translate(702 132.2) rotate(0) scale(2.0595 2.1333)" fill="none" stroke="#dcd8a0" stroke-width="1.1" stroke-linecap="round" stroke-linejoin="round"><path vector-effect="non-scaling-stroke" transform="translate(0.000 0)" d="M3 2.6C2.8 3.4 2.2 3.8 1.5 3.8C0.6 3.8 0 3.1 0 1.9C0 0.8 0.6 0 1.5 0C2.5 0 3 0.9 3 2.6C3 4.8 2.4 6 1.4 6C0.9 6 0.5 5.8 0.2 5.4"/><path vector-effect="non-scaling-stroke" transform="translate(4.500 0)" d="M0.25 5.6V6"/><path vector-effect="non-scaling-stroke" transform="translate(6.500 0)" d="M0.2 0.9L1 0V6"/><path vector-effect="non-scaling-stroke" transform="translate(9.200 0)" d="M2.3 6V0L0 4.2H3.1"/><path vector-effect="non-scaling-stroke" transform="translate(13.800 0)" d="M0.1 0H2.9L1.3 2.4C2.5 2.4 3 3.3 3 4.2C3 5.3 2.3 6 1.4 6C0.8 6 0.3 5.7 0 5.3"/></g><g transform="translate(648.3 160.3) rotate(0) scale(2.0361 1.9000)" fill="none" stroke="#dcd8a0" stroke-width="1.1" stroke-linecap="round" stroke-linejoin="round"><path vector-effect="non-scaling-stroke" transform="translate(0.000 0)" d="M1.5 0C0.3 0 0 1.5 0 3C0 4.5 0.3 6 1.5 6C2.7 6 3 4.5 3 3C3 1.5 2.7 0 1.5 0z"/><path vector-effect="non-scaling-stroke" transform="translate(4.500 0)" d="M0.25 5.6V6"/><path vector-effect="non-scaling-stroke" transform="translate(6.500 0)" d="M0.2 0.9L1 0V6"/><path vector-effect="non-scaling-stroke" transform="translate(9.200 0)" d="M0.2 0.9L1 0V6"/><path vector-effect="non-scaling-stroke" transform="translate(11.900 0)" d="M2.7 0.6C2.4 0.2 2 0 1.5 0C0.5 0 0 1.3 0 3.3C0 5 0.5 6 1.5 6C2.4 6 3 5.3 3 4.1C3 3 2.4 2.3 1.5 2.3C0.8 2.3 0.2 2.8 0 3.6"/><path vector-effect="non-scaling-stroke" transform="translate(16.400 0)" d="M0.1 0H2.9L1.3 2.4C2.5 2.4 3 3.3 3 4.2C3 5.3 2.3 6 1.4 6C0.8 6 0.3 5.7 0 5.3"/></g><g transform="translate(468.6 276) rotate(-90) scale(1.9130 2.0000)" fill="none" stroke="#dcd8a0" stroke-width="1.1" stroke-linecap="round" stroke-linejoin="round"><path vector-effect="non-scaling-stroke" transform="translate(0.000 0)" d="M0.1 0H2.9L1.3 2.4C2.5 2.4 3 3.3 3 4.2C3 5.3 2.3 6 1.4 6C0.8 6 0.3 5.7 0 5.3"/><path vector-effect="non-scaling-stroke" transform="translate(4.500 0)" d="M0.25 5.6V6"/><path vector-effect="non-scaling-stroke" transform="translate(6.500 0)" d="M2.8 0H0.4L0.2 2.6C0.6 2.3 1 2.1 1.5 2.1C2.4 2.1 3 2.9 3 4C3 5.2 2.4 6 1.4 6C0.8 6 0.3 5.7 0 5.3"/><path vector-effect="non-scaling-stroke" transform="translate(11.000 0)" d="M3 2.6C2.8 3.4 2.2 3.8 1.5 3.8C0.6 3.8 0 3.1 0 1.9C0 0.8 0.6 0 1.5 0C2.5 0 3 0.9 3 2.6C3 4.8 2.4 6 1.4 6C0.9 6 0.5 5.8 0.2 5.4"/><path vector-effect="non-scaling-stroke" transform="translate(15.500 0)" d="M0.1 0H2.9L1.3 2.4C2.5 2.4 3 3.3 3 4.2C3 5.3 2.3 6 1.4 6C0.8 6 0.3 5.7 0 5.3"/><path vector-effect="non-scaling-stroke" transform="translate(20.000 0)" d="M0 0H3L1 6"/></g><g transform="translate(475.3 332.8) rotate(-90) scale(1.9459 2.0500)" fill="none" stroke="#dcd8a0" stroke-width="1.1" stroke-linecap="round" stroke-linejoin="round"><path vector-effect="non-scaling-stroke" transform="translate(0.000 0)" d="M1.5 0C0.3 0 0 1.5 0 3C0 4.5 0.3 6 1.5 6C2.7 6 3 4.5 3 3C3 1.5 2.7 0 1.5 0z"/><path vector-effect="non-scaling-stroke" transform="translate(4.500 0)" d="M0.25 5.6V6"/><path vector-effect="non-scaling-stroke" transform="translate(6.500 0)" d="M2.7 0.6C2.4 0.2 2 0 1.5 0C0.5 0 0 1.3 0 3.3C0 5 0.5 6 1.5 6C2.4 6 3 5.3 3 4.1C3 3 2.4 2.3 1.5 2.3C0.8 2.3 0.2 2.8 0 3.6"/><path vector-effect="non-scaling-stroke" transform="translate(11.000 0)" d="M0.1 1.1C0.4 0.3 0.9 0 1.5 0C2.3 0 2.9 0.5 2.9 1.4C2.9 2.3 2.3 3 0 6H3"/><path vector-effect="non-scaling-stroke" transform="translate(15.500 0)" d="M2.8 0H0.4L0.2 2.6C0.6 2.3 1 2.1 1.5 2.1C2.4 2.1 3 2.9 3 4C3 5.2 2.4 6 1.4 6C0.8 6 0.3 5.7 0 5.3"/></g><g transform="translate(649.8 332.5) rotate(0) scale(1.9333 1.9667)" fill="none" stroke="#dcd8a0" stroke-width="1.1" stroke-linecap="round" stroke-linejoin="round"><path vector-effect="non-scaling-stroke" transform="translate(0.000 0)" d="M0.1 1.1C0.4 0.3 0.9 0 1.5 0C2.3 0 2.9 0.5 2.9 1.4C2.9 2.3 2.3 3 0 6H3"/><path vector-effect="non-scaling-stroke" transform="translate(4.500 0)" d="M2.8 0H0.4L0.2 2.6C0.6 2.3 1 2.1 1.5 2.1C2.4 2.1 3 2.9 3 4C3 5.2 2.4 6 1.4 6C0.8 6 0.3 5.7 0 5.3"/><path vector-effect="non-scaling-stroke" transform="translate(9.000 0)" d="M1.5 0C0.3 0 0 1.5 0 3C0 4.5 0.3 6 1.5 6C2.7 6 3 4.5 3 3C3 1.5 2.7 0 1.5 0z"/></g><g transform="translate(627.8 344.6) rotate(0) scale(1.5899 1.7000)" fill="none" stroke="#e4e2d0" stroke-width="1.1" stroke-linecap="round" stroke-linejoin="round"><path vector-effect="non-scaling-stroke" transform="translate(0.000 0)" d="M0.1 1.1C0.4 0.3 0.9 0 1.5 0C2.3 0 2.9 0.5 2.9 1.4C2.9 2.3 2.3 3 0 6H3"/><path vector-effect="non-scaling-stroke" transform="translate(4.500 0)" d="M0.5 2.3V2.7M0.5 5.5L0.1 6.8"/><path vector-effect="non-scaling-stroke" transform="translate(6.600 0)" d="M1.2 -0.3H0.1V6.3H1.2"/><path vector-effect="non-scaling-stroke" transform="translate(9.300 0)" d="M2.7 0.6C2.4 0.2 2 0 1.5 0C0.5 0 0 1.3 0 3.3C0 5 0.5 6 1.5 6C2.4 6 3 5.3 3 4.1C3 3 2.4 2.3 1.5 2.3C0.8 2.3 0.2 2.8 0 3.6"/><path vector-effect="non-scaling-stroke" transform="translate(13.800 0)" d="M0.5 5.5L0.1 6.8"/><path vector-effect="non-scaling-stroke" transform="translate(15.900 0)" d="M2.3 6V0L0 4.2H3.1"/><path vector-effect="non-scaling-stroke" transform="translate(20.500 0)" d="M0 -0.3H1.1V6.3H0"/></g><path shape-rendering="crispEdges" d="M564.7 244H603V262H564.7zM603.9 201.5V304M607.4 193.3V312.8M615.5 193V313M642.7 193V313M644.7 193V313M603.9 201.5H607.4M603.9 304H607.4M607.4 193.3H738M607.4 198H738M607.4 205.5H738M607.4 212.3H738M607.4 217.2H738M607.4 289.7H738M607.4 294.4H738M607.4 301H738M607.4 308.7H738M607.4 312.8H738M608.4 280H614V291.3H608.4z" fill="none" stroke="#f2f2f2" stroke-width="1"/><path shape-rendering="crispEdges" d="M430.4 453V421.7H576.9V453M490.9 421.7V453M430.4 444.6H576.9" fill="none" stroke="#dcd8a0" stroke-width="1"/><g transform="translate(444.8 429) rotate(0) scale(1.4623 1.5667)" fill="none" stroke="#dcd8a0" stroke-width="1.1" stroke-linecap="round" stroke-linejoin="round"><path vector-effect="non-scaling-stroke" transform="translate(0.000 0)" d="M0 6V0L1.7 5L3.4 0V6"/><path vector-effect="non-scaling-stroke" transform="translate(4.900 0)" d="M1.7 0C0.4 0 0 1.5 0 3C0 4.5 0.4 6 1.7 6C3 6 3.4 4.5 3.4 3C3.4 1.5 3 0 1.7 0z"/><path vector-effect="non-scaling-stroke" transform="translate(9.800 0)" d="M0 0V6H1.2C2.5 6 3 5 3 3C3 1 2.5 0 1.2 0z"/><path vector-effect="non-scaling-stroke" transform="translate(14.300 0)" d="M2.8 0H0V6H2.8M0 2.9H2"/><path vector-effect="non-scaling-stroke" transform="translate(18.600 0)" d="M0 0V6H2.6"/></g><g transform="translate(495 424) rotate(0) scale(1.4700 1.3000)" fill="none" stroke="#dcd8a0" stroke-width="1.1" stroke-linecap="round" stroke-linejoin="round"><path vector-effect="non-scaling-stroke" transform="translate(0.000 0)" d="M0 6V0L1.7 5L3.4 0V6"/><path vector-effect="non-scaling-stroke" transform="translate(4.900 0)" d="M1.7 0C0.4 0 0 1.5 0 3C0 4.5 0.4 6 1.7 6C3 6 3.4 4.5 3.4 3C3.4 1.5 3 0 1.7 0z"/><path vector-effect="non-scaling-stroke" transform="translate(9.800 0)" d="M0 0H3M1.5 0V6"/><path vector-effect="non-scaling-stroke" transform="translate(14.300 0)" d="M1.7 0C0.4 0 0 1.5 0 3C0 4.5 0.4 6 1.7 6C3 6 3.4 4.5 3.4 3C3.4 1.5 3 0 1.7 0z"/><path vector-effect="non-scaling-stroke" transform="translate(19.200 0)" d="M0 6V0H1.7C2.6 0 3 0.6 3 1.5C3 2.4 2.6 3 1.7 3H0M1.7 3L3 6"/><path vector-effect="non-scaling-stroke" transform="translate(26.800 0)" d="M0 0V6H2.6"/><path vector-effect="non-scaling-stroke" transform="translate(30.900 0)" d="M2.8 0H0V6H2.8M0 2.9H2"/><path vector-effect="non-scaling-stroke" transform="translate(35.200 0)" d="M0 6V0L3 6V0"/><path vector-effect="non-scaling-stroke" transform="translate(39.700 0)" d="M3 0.8C2.6 0.2 2.2 0 1.6 0C0.5 0 0 1.2 0 3C0 4.8 0.5 6 1.6 6C2.5 6 3 5.2 3 4.2V3.3H1.7"/><path vector-effect="non-scaling-stroke" transform="translate(44.200 0)" d="M0 0H3M1.5 0V6"/><path vector-effect="non-scaling-stroke" transform="translate(48.700 0)" d="M0 0V6M3 0V6M0 3H3"/></g><g transform="translate(525.5 433) rotate(0) scale(1.7045 1.5000)" fill="none" stroke="#dcd8a0" stroke-width="1.1" stroke-linecap="round" stroke-linejoin="round"><path vector-effect="non-scaling-stroke" transform="translate(0.000 0)" d="M0.6 0L0.1 1.8M1.6 0L1.1 1.8"/><path vector-effect="non-scaling-stroke" transform="translate(3.100 0)" d="M0 0V6H2.6"/><path vector-effect="non-scaling-stroke" transform="translate(7.200 0)" d="M0.6 0L0.1 1.8M1.6 0L1.1 1.8"/></g><g transform="translate(445.5 447) rotate(0) scale(1.4762 1.5667)" fill="none" stroke="#dcd8a0" stroke-width="1.1" stroke-linecap="round" stroke-linejoin="round"><path vector-effect="non-scaling-stroke" transform="translate(0.000 0)" d="M0.2 0V6"/><path vector-effect="non-scaling-stroke" transform="translate(1.900 0)" d="M0 0V6H1.8C2.6 6 3 5.5 3 4.5C3 3.5 2.6 3 1.8 3H0M1.6 3C2.4 3 2.8 2.5 2.8 1.5C2.8 0.5 2.4 0 1.6 0H0"/><path vector-effect="non-scaling-stroke" transform="translate(6.400 0)" d="M2.8 0H0V6H2.8M0 2.9H2"/><path vector-effect="non-scaling-stroke" transform="translate(10.700 0)" d="M0.1 0H2.9L1.3 2.4C2.5 2.4 3 3.3 3 4.2C3 5.3 2.3 6 1.4 6C0.8 6 0.3 5.7 0 5.3"/><path vector-effect="non-scaling-stroke" transform="translate(15.200 0)" d="M2.3 6V0L0 4.2H3.1"/><path vector-effect="non-scaling-stroke" transform="translate(19.800 0)" d="M0.2 0.9L1 0V6"/></g><g transform="translate(508 447) rotate(0) scale(1.3625 1.5667)" fill="none" stroke="#dcd8a0" stroke-width="1.1" stroke-linecap="round" stroke-linejoin="round"><path vector-effect="non-scaling-stroke" transform="translate(0.000 0)" d="M2.8 0H0.4L0.2 2.6C0.6 2.3 1 2.1 1.5 2.1C2.4 2.1 3 2.9 3 4C3 5.2 2.4 6 1.4 6C0.8 6 0.3 5.7 0 5.3"/><path vector-effect="non-scaling-stroke" transform="translate(4.500 0)" d="M0.25 5.6V6"/><path vector-effect="non-scaling-stroke" transform="translate(6.500 0)" d="M0.1 0H2.9L1.3 2.4C2.5 2.4 3 3.3 3 4.2C3 5.3 2.3 6 1.4 6C0.8 6 0.3 5.7 0 5.3"/><path vector-effect="non-scaling-stroke" transform="translate(11.000 0)" d="M0.1 1.1C0.4 0.3 0.9 0 1.5 0C2.3 0 2.9 0.5 2.9 1.4C2.9 2.3 2.3 3 0 6H3"/><path vector-effect="non-scaling-stroke" transform="translate(18.600 0)" d="M1.2 -0.3H0.1V6.3H1.2"/><path vector-effect="non-scaling-stroke" transform="translate(21.300 0)" d="M0.2 0.9L1 0V6"/><path vector-effect="non-scaling-stroke" transform="translate(24.000 0)" d="M0.1 0H2.9L1.3 2.4C2.5 2.4 3 3.3 3 4.2C3 5.3 2.3 6 1.4 6C0.8 6 0.3 5.7 0 5.3"/><path vector-effect="non-scaling-stroke" transform="translate(28.500 0)" d="M2.8 0H0.4L0.2 2.6C0.6 2.3 1 2.1 1.5 2.1C2.4 2.1 3 2.9 3 4C3 5.2 2.4 6 1.4 6C0.8 6 0.3 5.7 0 5.3"/><path vector-effect="non-scaling-stroke" transform="translate(33.000 0)" d="M0.25 5.6V6"/><path vector-effect="non-scaling-stroke" transform="translate(35.000 0)" d="M0.2 0.9L1 0V6"/><path vector-effect="non-scaling-stroke" transform="translate(37.700 0)" d="M0 -0.3H1.1V6.3H0"/></g><defs><pattern id="hp" width="2.5" height="2.6" patternUnits="userSpaceOnUse" patternTransform="rotate(18)"><rect width="2.5" height="2.6" fill="#000"/><rect width="1.4" height="2.6" fill="#f2f2f2"/><rect y="1.9" width="1.4" height="0.5" fill="#777"/></pattern><pattern id="hq" width="2.5" height="2.6" patternUnits="userSpaceOnUse" patternTransform="rotate(-28)"><rect width="2.5" height="2.6" fill="#000"/><rect width="1.4" height="2.6" fill="#f2f2f2"/><rect y="1.9" width="1.4" height="0.5" fill="#777"/></pattern></defs><path d="M111.3 407H142.4L148.7 412.4L160.2 432.9L150.4 453H95V438L97.5 433.5L105 416z" fill="url(#hp)" stroke="#f4f4f4" stroke-width="1.2"/><path d="M142.4 407L148.7 412.4L160.2 432.9L150.4 453H142L146 441L140.5 434z" fill="url(#hq)" stroke="#f4f4f4" stroke-width="1"/><path d="M121.5 408H128L122.5 433H115.5z" fill="#000"/><path d="M137.5 409L140.5 409L136.5 433L133.5 433z" fill="#000" opacity=".8"/><path d="M147 417L149.5 416L156.5 446L154 449z" fill="#000"/><circle cx="123.8" cy="413.2" r="2.3" fill="#fff"/><path d="M98.5 434.5H140.5L145.5 441H101.5z" fill="#000" stroke="#f4f4f4" stroke-width="1.2"/><path d="M102.5 443.5H135.5L142 453H102.5z" fill="#000" stroke="#f4f4f4" stroke-width="1.2"/><path d="M96 441.5L101 436M97 447h4M118 453v-5M121 453v-4" stroke="#f4f4f4" stroke-width="1.1"/></g></svg><div class="a" style="left:757px;top:112px;width:142px;height:355px;background:#d0d0d0"></div><div class="t" style="left:760px;top:118.5px;font-size:12.2px;color:#555">Layer List</div><svg style="left:869.5px;top:118.5px" width="11" height="11"><rect x="0.5" y="0.5" width="10" height="10" rx="2" fill="#e2e2e2" stroke="#8a8a8a"/><rect x="2.5" y="4.5" width="4" height="4" fill="none" stroke="#777"/><path d="M4.5 4.5v-2h4v4h-2" fill="none" stroke="#777"/></svg><svg style="left:885.5px;top:118.5px" width="11" height="11"><rect x="0.5" y="0.5" width="10" height="10" rx="2" fill="#e2e2e2" stroke="#8a8a8a"/><path d="M3 3l5 5M8 3l-5 5" stroke="#555" stroke-width="1.6"/></svg><div class="b" style="left:758.7px;top:138px;width:25.3px;height:26px"></div><svg style="left:758.7px;top:138px" width="26" height="26" viewBox="0 0 26 26"><g transform="translate(5.5,6.5)"><path d="M1.2 6.2Q7 0.8 13.2 6.4Q7.5 14.5 1.2 6.2z" fill="#fff" stroke="#444" stroke-width="0.8"/><path d="M0.8 5.6Q6.8 -0.6 13.4 6.2" fill="none" stroke="#0a0a0a" stroke-width="2"/><circle cx="7.2" cy="6.2" r="3.6" fill="#0a0a0a"/><circle cx="5.9" cy="4.9" r="0.8" fill="#777"/><path d="M0.5 4.5l2 1" stroke="#0a0a0a" stroke-width="1.2"/></g></svg><div class="b" style="left:787.2px;top:138px;width:25.3px;height:26px"></div><svg style="left:787.2px;top:138px" width="26" height="26" viewBox="0 0 26 26"><g transform="translate(5.5,6.5)"><path d="M0.5 5.5Q2 0.5 7.5 1Q13.5 1.5 13.5 6.5Q13 11.5 7.5 11.5Q1.5 11.5 0.5 5.5z" fill="#b2b2b2"/><path d="M1 6Q3 2 7 2.5Q3.5 5 5 10Q1.5 9 1 6z" fill="#e6e6e6"/><circle cx="8.5" cy="6.2" r="3" fill="#a2a2a2"/></g></svg><div class="b" style="left:815.6px;top:138px;width:25.3px;height:26px"></div><svg style="left:815.6px;top:138px" width="26" height="26" viewBox="0 0 26 26"><path d="M8.5 13h8M12.5 9v8" stroke="#1a1aa0" stroke-width="2.2"/></svg><div class="b" style="left:844px;top:138px;width:25.3px;height:26px"></div><svg style="left:844px;top:138px" width="26" height="26" viewBox="0 0 26 26"><path d="M9.5 13h6" stroke="#1a1aa0" stroke-width="2.2"/></svg><div class="b" style="left:872.3px;top:138px;width:25.3px;height:26px"></div><svg style="left:872.3px;top:138px" width="26" height="26" viewBox="0 0 26 26"><path d="M7 6v14" stroke="#111" stroke-width="1.3"/><path d="M9.5 7v2M9.5 11v2M9.5 15v2" stroke="#111"/><rect x="11.5" y="6" width="6" height="2" fill="#c04a6a"/><rect x="11.5" y="9" width="6" height="2" fill="#3a9a5a"/><rect x="11.5" y="12" width="6" height="2" fill="#111"/><rect x="11.5" y="15" width="6" height="2" fill="#111"/><rect x="11.5" y="18" width="6" height="2" fill="#111"/></svg><div class="a" style="left:757.5px;top:165.5px;width:142px;height:141px;background:#fff;border-top:1px solid #a9a9a9;border-left:1px solid #b0b0b0"></div><svg style="left:760.5px;top:170px" width="14" height="13" viewBox="0 0 14 13"><path d="M1.2 6.2Q7 0.8 13.2 6.4Q7.5 14.5 1.2 6.2z" fill="#fff" stroke="#444" stroke-width="0.8"/><path d="M0.8 5.6Q6.8 -0.6 13.4 6.2" fill="none" stroke="#0a0a0a" stroke-width="2"/><circle cx="7.2" cy="6.2" r="3.6" fill="#0a0a0a"/><circle cx="5.9" cy="4.9" r="0.8" fill="#777"/><path d="M0.5 4.5l2 1" stroke="#0a0a0a" stroke-width="1.2"/></svg><svg style="left:778.5px;top:170px" width="10" height="12" viewBox="0 0 10 12"><rect x="0.5" y="5.5" width="7.5" height="5.8" fill="#a9a9a9"/><path d="M1.9 5.5V3.6a2.35 2.35 0 0 1 4.7 0V5.5" fill="none" stroke="#b3b3b3" stroke-width="1.1"/></svg><div class="t" style="left:791.5px;top:170px;font-size:12.6px;color:#222;-webkit-text-stroke:0.2px #222;transform:scaleX(.875);transform-origin:0 0">0</div><svg style="left:760.5px;top:187px" width="14" height="13" viewBox="0 0 14 13"><path d="M1.2 6.2Q7 0.8 13.2 6.4Q7.5 14.5 1.2 6.2z" fill="#fff" stroke="#444" stroke-width="0.8"/><path d="M0.8 5.6Q6.8 -0.6 13.4 6.2" fill="none" stroke="#0a0a0a" stroke-width="2"/><circle cx="7.2" cy="6.2" r="3.6" fill="#0a0a0a"/><circle cx="5.9" cy="4.9" r="0.8" fill="#777"/><path d="M0.5 4.5l2 1" stroke="#0a0a0a" stroke-width="1.2"/></svg><svg style="left:778.5px;top:187px" width="10" height="12" viewBox="0 0 10 12"><rect x="0.5" y="5.5" width="7.5" height="5.8" fill="#a9a9a9"/><path d="M1.9 5.5V3.6a2.35 2.35 0 0 1 4.7 0V5.5" fill="none" stroke="#b3b3b3" stroke-width="1.1"/></svg><div class="t" style="left:791.5px;top:187px;font-size:12.6px;color:#222;-webkit-text-stroke:0.2px #222;transform:scaleX(.875);transform-origin:0 0">DEFAULT_1</div><svg style="left:760.5px;top:204px" width="14" height="13" viewBox="0 0 14 13"><path d="M1.2 6.2Q7 0.8 13.2 6.4Q7.5 14.5 1.2 6.2z" fill="#fff" stroke="#444" stroke-width="0.8"/><path d="M0.8 5.6Q6.8 -0.6 13.4 6.2" fill="none" stroke="#0a0a0a" stroke-width="2"/><circle cx="7.2" cy="6.2" r="3.6" fill="#0a0a0a"/><circle cx="5.9" cy="4.9" r="0.8" fill="#777"/><path d="M0.5 4.5l2 1" stroke="#0a0a0a" stroke-width="1.2"/></svg><svg style="left:778.5px;top:204px" width="10" height="12" viewBox="0 0 10 12"><rect x="0.5" y="5.5" width="7.5" height="5.8" fill="#a9a9a9"/><path d="M1.9 5.5V3.6a2.35 2.35 0 0 1 4.7 0V5.5" fill="none" stroke="#b3b3b3" stroke-width="1.1"/></svg><div class="t" style="left:791.5px;top:204px;font-size:12.6px;color:#222;-webkit-text-stroke:0.2px #222;transform:scaleX(.875);transform-origin:0 0">DEFAULT_2</div><svg style="left:760.5px;top:221px" width="14" height="13" viewBox="0 0 14 13"><path d="M1.2 6.2Q7 0.8 13.2 6.4Q7.5 14.5 1.2 6.2z" fill="#fff" stroke="#444" stroke-width="0.8"/><path d="M0.8 5.6Q6.8 -0.6 13.4 6.2" fill="none" stroke="#0a0a0a" stroke-width="2"/><circle cx="7.2" cy="6.2" r="3.6" fill="#0a0a0a"/><circle cx="5.9" cy="4.9" r="0.8" fill="#777"/><path d="M0.5 4.5l2 1" stroke="#0a0a0a" stroke-width="1.2"/></svg><svg style="left:778.5px;top:221px" width="10" height="12" viewBox="0 0 10 12"><rect x="0.5" y="5.5" width="7.5" height="5.8" fill="#a9a9a9"/><path d="M1.9 5.5V3.6a2.35 2.35 0 0 1 4.7 0V5.5" fill="none" stroke="#b3b3b3" stroke-width="1.1"/></svg><div class="t" style="left:791.5px;top:221px;font-size:12.6px;color:#222;-webkit-text-stroke:0.2px #222;transform:scaleX(.875);transform-origin:0 0">DEFAULT_3</div><div class="a" style="left:758px;top:235px;width:139.7px;height:17px;background:#7c8898"></div><svg style="left:760.5px;top:238px" width="14" height="13" viewBox="0 0 14 13"><path d="M1.2 6.2Q7 0.8 13.2 6.4Q7.5 14.5 1.2 6.2z" fill="#fff" stroke="#444" stroke-width="0.8"/><path d="M0.8 5.6Q6.8 -0.6 13.4 6.2" fill="none" stroke="#0a0a0a" stroke-width="2"/><circle cx="7.2" cy="6.2" r="3.6" fill="#0a0a0a"/><circle cx="5.9" cy="4.9" r="0.8" fill="#777"/><path d="M0.5 4.5l2 1" stroke="#0a0a0a" stroke-width="1.2"/></svg><svg style="left:778.5px;top:238px" width="10" height="12" viewBox="0 0 10 12"><rect x="0.5" y="5.5" width="7.5" height="5.8" fill="#a9a9a9"/><path d="M1.9 5.5V3.6a2.35 2.35 0 0 1 4.7 0V5.5" fill="none" stroke="#b3b3b3" stroke-width="1.1"/></svg><div class="t" style="left:791.5px;top:238px;font-size:12.6px;color:#e4e8f0;-webkit-text-stroke:0.2px #e4e8f0;transform:scaleX(.875);transform-origin:0 0">DEFPOINTS</div><svg style="left:760.5px;top:255px" width="14" height="13" viewBox="0 0 14 13"><path d="M1.2 6.2Q7 0.8 13.2 6.4Q7.5 14.5 1.2 6.2z" fill="#fff" stroke="#444" stroke-width="0.8"/><path d="M0.8 5.6Q6.8 -0.6 13.4 6.2" fill="none" stroke="#0a0a0a" stroke-width="2"/><circle cx="7.2" cy="6.2" r="3.6" fill="#0a0a0a"/><circle cx="5.9" cy="4.9" r="0.8" fill="#777"/><path d="M0.5 4.5l2 1" stroke="#0a0a0a" stroke-width="1.2"/></svg><svg style="left:778.5px;top:255px" width="10" height="12" viewBox="0 0 10 12"><rect x="0.5" y="5.5" width="7.5" height="5.8" fill="#a9a9a9"/><path d="M1.9 5.5V3.6a2.35 2.35 0 0 1 4.7 0V5.5" fill="none" stroke="#b3b3b3" stroke-width="1.1"/></svg><div class="t" style="left:791.5px;top:255px;font-size:12.6px;color:#222;-webkit-text-stroke:0.2px #222;transform:scaleX(.875);transform-origin:0 0">NOSHOW</div><div class="doth" style="left:757px;top:307px;width:143px;height:4px"></div><div class="t" style="left:760px;top:317.5px;font-size:12.2px;color:#555">Block List</div><svg style="left:869.5px;top:318px" width="11" height="11"><rect x="0.5" y="0.5" width="10" height="10" rx="2" fill="#e2e2e2" stroke="#8a8a8a"/><rect x="2.5" y="4.5" width="4" height="4" fill="none" stroke="#777"/><path d="M4.5 4.5v-2h4v4h-2" fill="none" stroke="#777"/></svg><svg style="left:885.5px;top:318px" width="11" height="11"><rect x="0.5" y="0.5" width="10" height="10" rx="2" fill="#e2e2e2" stroke="#8a8a8a"/><path d="M3 3l5 5M8 3l-5 5" stroke="#555" stroke-width="1.6"/></svg><div class="b" style="left:758.7px;top:337px;width:25.3px;height:26px"></div><svg style="left:758.7px;top:337px" width="26" height="26" viewBox="0 0 26 26"><g transform="translate(5.5,6.5)"><path d="M1.2 6.2Q7 0.8 13.2 6.4Q7.5 14.5 1.2 6.2z" fill="#fff" stroke="#444" stroke-width="0.8"/><path d="M0.8 5.6Q6.8 -0.6 13.4 6.2" fill="none" stroke="#0a0a0a" stroke-width="2"/><circle cx="7.2" cy="6.2" r="3.6" fill="#0a0a0a"/><circle cx="5.9" cy="4.9" r="0.8" fill="#777"/><path d="M0.5 4.5l2 1" stroke="#0a0a0a" stroke-width="1.2"/></g></svg><div class="b" style="left:787.2px;top:337px;width:25.3px;height:26px"></div><svg style="left:787.2px;top:337px" width="26" height="26" viewBox="0 0 26 26"><g transform="translate(5.5,6.5)"><path d="M0.5 5.5Q2 0.5 7.5 1Q13.5 1.5 13.5 6.5Q13 11.5 7.5 11.5Q1.5 11.5 0.5 5.5z" fill="#b2b2b2"/><path d="M1 6Q3 2 7 2.5Q3.5 5 5 10Q1.5 9 1 6z" fill="#e6e6e6"/><circle cx="8.5" cy="6.2" r="3" fill="#a2a2a2"/></g></svg><div class="b" style="left:815.6px;top:337px;width:25.3px;height:26px"></div><svg style="left:815.6px;top:337px" width="26" height="26" viewBox="0 0 26 26"><path d="M8.5 13h8M12.5 9v8" stroke="#1a1aa0" stroke-width="2.2"/></svg><div class="b" style="left:844px;top:337px;width:25.3px;height:26px"></div><svg style="left:844px;top:337px" width="26" height="26" viewBox="0 0 26 26"><path d="M9.5 13h6" stroke="#1a1aa0" stroke-width="2.2"/></svg><div class="b" style="left:872.3px;top:337px;width:25.3px;height:26px"></div><svg style="left:872.3px;top:337px" width="26" height="26" viewBox="0 0 26 26"><text x="5.6" y="17" font-size="11" font-family="Liberation Sans" fill="#2a2a2a">a</text><text x="14.4" y="17" font-size="11" font-family="Liberation Sans" fill="#2a2a2a">b</text><path d="M13.3 6.5V19" stroke="#222" stroke-width="0.9"/></svg><div class="b" style="left:787.2px;top:367.5px;width:25.3px;height:26px"></div><svg style="left:787.2px;top:367.5px" width="26" height="26" viewBox="0 0 26 26"><path d="M8 20L9 15.5L16.5 6.5L18.5 8.3L11 17.5z" fill="#fff" stroke="#111" stroke-width="1.3" stroke-linejoin="round"/><path d="M8 20l1.6-3" stroke="#111" stroke-width="1.5"/></svg><div class="b" style="left:844px;top:367.5px;width:25.3px;height:26px"></div><svg style="left:844px;top:367.5px" width="26" height="26" viewBox="0 0 26 26"><path d="M6.5 6.5h8l4 4v10h-12z" fill="#fff" stroke="#111" stroke-width="1.3"/><path d="M14.5 6.5v4h4" fill="none" stroke="#111"/><path d="M8 9Q12 6 13.5 11" fill="none" stroke="#1a3aa0" stroke-width="1.6"/><path d="M10.5 11.5h6l-3 3z" fill="#1a3aa0"/></svg><div class="a" style="left:757.5px;top:396px;width:141px;height:71px;background:#fff;border-top:1px solid #a9a9a9;border-left:1px solid #b0b0b0"></div><svg style="left:761px;top:400.7px" width="14" height="13" viewBox="0 0 14 13"><path d="M1.2 6.2Q7 0.8 13.2 6.4Q7.5 14.5 1.2 6.2z" fill="#fff" stroke="#444" stroke-width="0.8"/><path d="M0.8 5.6Q6.8 -0.6 13.4 6.2" fill="none" stroke="#0a0a0a" stroke-width="2"/><circle cx="7.2" cy="6.2" r="3.6" fill="#0a0a0a"/><circle cx="5.9" cy="4.9" r="0.8" fill="#777"/><path d="M0.5 4.5l2 1" stroke="#0a0a0a" stroke-width="1.2"/></svg><div class="t" style="left:776.5px;top:400.2px;font-size:12.6px;color:#222;-webkit-text-stroke:0.2px #222;transform:scaleX(.875);transform-origin:0 0">*D7</div><svg style="left:761px;top:417.9px" width="14" height="13" viewBox="0 0 14 13"><path d="M1.2 6.2Q7 0.8 13.2 6.4Q7.5 14.5 1.2 6.2z" fill="#fff" stroke="#444" stroke-width="0.8"/><path d="M0.8 5.6Q6.8 -0.6 13.4 6.2" fill="none" stroke="#0a0a0a" stroke-width="2"/><circle cx="7.2" cy="6.2" r="3.6" fill="#0a0a0a"/><circle cx="5.9" cy="4.9" r="0.8" fill="#777"/><path d="M0.5 4.5l2 1" stroke="#0a0a0a" stroke-width="1.2"/></svg><div class="t" style="left:776.5px;top:417.4px;font-size:12.6px;color:#222;-webkit-text-stroke:0.2px #222;transform:scaleX(.875);transform-origin:0 0">*D8</div><svg style="left:761px;top:435.09999999999997px" width="14" height="13" viewBox="0 0 14 13"><path d="M1.2 6.2Q7 0.8 13.2 6.4Q7.5 14.5 1.2 6.2z" fill="#fff" stroke="#444" stroke-width="0.8"/><path d="M0.8 5.6Q6.8 -0.6 13.4 6.2" fill="none" stroke="#0a0a0a" stroke-width="2"/><circle cx="7.2" cy="6.2" r="3.6" fill="#0a0a0a"/><circle cx="5.9" cy="4.9" r="0.8" fill="#777"/><path d="M0.5 4.5l2 1" stroke="#0a0a0a" stroke-width="1.2"/></svg><div class="t" style="left:776.5px;top:434.59999999999997px;font-size:12.6px;color:#222;-webkit-text-stroke:0.2px #222;transform:scaleX(.875);transform-origin:0 0">*D9</div><div class="a" style="left:758px;top:450px;width:126.7px;height:16.5px;background:#7c8898"></div><svg style="left:761px;top:452.29999999999995px" width="14" height="13" viewBox="0 0 14 13"><path d="M1.2 6.2Q7 0.8 13.2 6.4Q7.5 14.5 1.2 6.2z" fill="#fff" stroke="#444" stroke-width="0.8"/><path d="M0.8 5.6Q6.8 -0.6 13.4 6.2" fill="none" stroke="#0a0a0a" stroke-width="2"/><circle cx="7.2" cy="6.2" r="3.6" fill="#0a0a0a"/><circle cx="5.9" cy="4.9" r="0.8" fill="#777"/><path d="M0.5 4.5l2 1" stroke="#0a0a0a" stroke-width="1.2"/></svg><div class="t" style="left:776.5px;top:451.79999999999995px;font-size:12.6px;color:#e4e8f0;-webkit-text-stroke:0.2px #e4e8f0;transform:scaleX(.875);transform-origin:0 0">STANDARD_BL0</div><div class="a" style="left:888px;top:416.5px;width:7px;height:33.5px;background:#8c8c8c;border-radius:3.5px"></div><div class="a" style="left:57px;top:472px;width:842px;height:183px;background:#d0d0d0"></div><div class="t" style="left:59px;top:479px;font-size:12.4px;color:#5a5a5a">Command line</div><svg style="left:870px;top:480px" width="11" height="11"><rect x="0.5" y="0.5" width="10" height="10" rx="2" fill="#e2e2e2" stroke="#8a8a8a"/><rect x="2.5" y="4.5" width="4" height="4" fill="none" stroke="#777"/><path d="M4.5 4.5v-2h4v4h-2" fill="none" stroke="#777"/></svg><svg style="left:886px;top:480px" width="11" height="11"><rect x="0.5" y="0.5" width="10" height="10" rx="2" fill="#e2e2e2" stroke="#8a8a8a"/><path d="M3 3l5 5M8 3l-5 5" stroke="#555" stroke-width="1.6"/></svg><div class="a" style="left:57.5px;top:497px;width:841.5px;height:129px;background:#fff;border-top:1px solid #8e8e8e;border-left:1px solid #b4b4b4"></div><div class="t" style="left:61.5px;top:501.5px;font-size:13px;color:#1e1e1e;-webkit-text-stroke:0.25px #1e1e1e">Loaded document: /home/jlwallen/Downloads/bridge.dxf</div><div class="t" style="left:61.5px;top:516.3px;font-size:13px;color:#1e1e1e;-webkit-text-stroke:0.25px #1e1e1e">Loaded document: /home/jlwallen/Downloads/iBE34.dxf</div><div class="t" style="left:57px;top:634.5px;font-size:12.6px;color:#555">Command:</div><div class="a" style="left:128.5px;top:631px;width:769px;height:20px;background:#fff;border-top:1px solid #c8c8c8"></div><div class="a" style="left:0;top:654px;width:900px;height:31px;background:#cdcdcd;border-top:1px solid #bdbdbd"></div><div class="a" style="left:182px;top:656px;width:1px;height:27px;background:#eaeaea"></div><div class="a" style="left:181px;top:656px;width:1px;height:27px;background:#b0b0b0"></div><div class="t" style="left:3.5px;top:659px;font-size:8.7px;color:#404040">14.6245 , 9.8156</div><div class="t" style="left:3.5px;top:671.5px;font-size:8.7px;color:#404040">17.6131 &lt; 34&deg;</div><div class="t" style="left:185px;top:659px;font-size:8.7px;color:#404040">14.6245 , 9.8156</div><div class="t" style="left:185px;top:671.5px;font-size:8.7px;color:#404040">17.6131 &lt; 34&deg;</div><svg style="left:501px;top:655px" width="17" height="28" viewBox="0 0 17 28"><path d="M9 5Q8 1 6 2" fill="none" stroke="#111" stroke-width="1"/><path d="M1.5 7.5Q1.5 5 4 5H12.5Q15 5 15 7.5V20Q15 26 8.25 26Q1.5 26 1.5 20z" fill="#fff" stroke="#111" stroke-width="1.3"/><path d="M1.5 13H15M6 5v8M10.5 5v8" stroke="#111" stroke-width="1.1"/></svg><div class="t" style="left:657px;top:658.5px;font-size:8.7px;color:#4a4a4a">Selected Entities:</div><div class="t" style="left:657px;top:671px;font-size:8.7px;color:#4a4a4a">2</div><div class="a" style="left:0;top:683px;width:900px;height:2px;background:#9a9a9a"></div><div class="a" style="left:899px;top:4px;width:1px;height:681px;background:#9c9c9c"></div><div class="a" style="left:0;top:4px;width:1px;height:681px;background:#9a9a9a"></div></body></html>
